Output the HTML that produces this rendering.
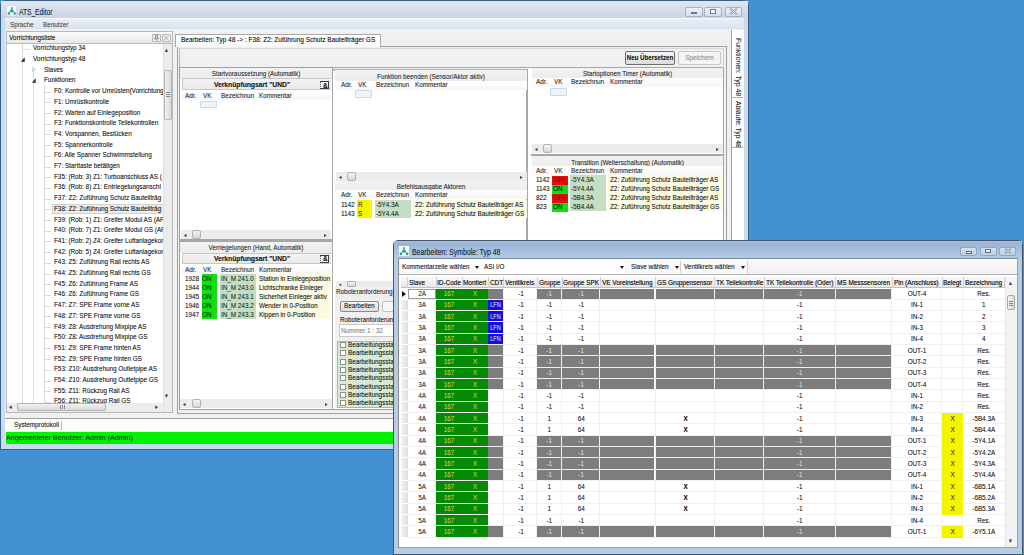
<!DOCTYPE html>
<html><head><meta charset="utf-8"><style>
html,body{margin:0;padding:0;width:1024px;height:555px;overflow:hidden;background:#4391d2;position:relative}
div{position:absolute;box-sizing:content-box}
svg{position:absolute}
.t{font-family:"Liberation Sans",sans-serif;font-size:8px;line-height:10px;height:10px;white-space:nowrap;transform:scaleX(.79);transform-origin:0 50%;text-shadow:0.2px 0 0 rgba(0,0,0,.35)}
.c{transform-origin:50% 50%}
</style></head><body>
<div style="left:0px;top:0px;width:749px;height:450px;background:#c9dbef;border:1px solid #3a5f86;box-sizing:border-box;border-radius:6px 6px 0 0"></div>
<div style="left:1px;top:1px;width:747px;height:17px;background:linear-gradient(#dfe7f1,#c8d5e5)"></div>
<div style="left:5px;top:17.5px;width:739px;height:1.5px;background:#f6f9fc"></div>
<svg style="position:absolute;left:6.5px;top:6px" width="9.5" height="9.5" viewBox="0 0 10 10"><rect width="10" height="10" fill="#f2fafa"/><path d="M4.3 1 h1.4 v2.2 l2.2 3.3 h-5.8 l2.2 -3.3 z" fill="#2aa58e"/><circle cx="1.9" cy="7.9" r="1.3" fill="#2a9a84"/><circle cx="8.1" cy="7.9" r="1.3" fill="#2a9a84"/></svg>
<div class="t" style="left:18.5px;top:7px;font-size:8.5px;color:#1e2a3a;transform:scaleX(0.78)">ATS_Editor</div>
<div style="left:685px;top:6.5px;width:17.5px;height:10px;background:linear-gradient(#e9eff7,#d3deeb);border:1px solid #a3b4c8;box-sizing:border-box;border-radius:2px"></div>
<div style="left:704px;top:6.5px;width:18px;height:10px;background:linear-gradient(#e9eff7,#d3deeb);border:1px solid #a3b4c8;box-sizing:border-box;border-radius:2px"></div>
<div style="left:724.5px;top:6.5px;width:17.5px;height:10px;background:linear-gradient(#e9eff7,#d3deeb);border:1px solid #a3b4c8;box-sizing:border-box;border-radius:2px"></div>
<div style="left:691px;top:11.5px;width:6px;height:2.5px;background:#f4f6f9;border:1px solid #6d7b8c;box-sizing:border-box"></div>
<div style="left:710px;top:9px;width:6px;height:5px;background:#f4f6f9;border:1px solid #6d7b8c;box-sizing:border-box"></div>
<svg style="position:absolute;left:729px;top:8px" width="9" height="7" viewBox="0 0 9 7"><path d="M1 0.5 L8 6.5 M8 0.5 L1 6.5" stroke="#8a96a6" stroke-width="2" /><path d="M1 0.5 L8 6.5 M8 0.5 L1 6.5" stroke="#eef2f7" stroke-width="0.8" /></svg>
<div style="left:5px;top:19px;width:739px;height:10.5px;background:linear-gradient(#e9eef7,#d9e1ee)"></div>
<div class="t" style="left:10px;top:19.5px;color:#585858">Sprache</div>
<div class="t" style="left:43px;top:19.5px;color:#585858">Benutzer</div>
<div style="left:5px;top:29px;width:738px;height:415px;background:#f0f0f0"></div>
<div style="left:6px;top:31px;width:167px;height:13px;background:linear-gradient(#fbfbfb,#e8e8e8);border:1px solid #b8b8b8;box-sizing:border-box"></div>
<div class="t" style="left:9px;top:33px;color:#111">Vorrichtungsliste</div>
<div style="left:152px;top:33.5px;width:8.5px;height:8px;border:1px solid #b8b8b8;background:#f2f2f2;box-sizing:border-box;border-radius:1px"></div>
<div style="left:162px;top:33.5px;width:8.5px;height:8px;border:1px solid #b8b8b8;background:#f2f2f2;box-sizing:border-box;border-radius:1px"></div>
<svg style="position:absolute;left:153px;top:34px" width="7" height="7" viewBox="0 0 7 7"><path d="M2.5 1 h2 v3 h1 v0.8 h-4 v-0.8 h1 z M3.5 4.8 v2" stroke="#777" stroke-width="0.7" fill="#ddd"/></svg>
<svg style="position:absolute;left:163px;top:34.5px" width="6.5" height="6" viewBox="0 0 7 6"><path d="M1 0.5 L6 5.5 M6 0.5 L1 5.5" stroke="#999" stroke-width="0.9"/></svg>
<div style="left:6px;top:44px;width:167px;height:369px;background:#fff;border:1px solid #b8b8b8;border-top:none;box-sizing:border-box"></div>
<div style="left:7px;top:44px;width:156px;height:359px;overflow:hidden">
<div class="t" style="left:26px;top:-0.7000000000000028px;color:#1a1a1a">Vorrichtungstyp 34</div>
<div class="t" style="left:26px;top:9.999999999999996px;color:#1a1a1a">Vorrichtungstyp 48</div>
<div class="t" style="left:37px;top:20.699999999999996px;color:#1a1a1a">Slaves</div>
<div class="t" style="left:37px;top:31.39999999999999px;color:#1a1a1a">Funktionen</div>
<div class="t" style="left:47px;top:42.099999999999994px;color:#1a1a1a">F0: Kontrolle vor Umrüsten(Vorrichtung</div>
<div class="t" style="left:47px;top:52.8px;color:#1a1a1a">F1: Umrüstkontrolle</div>
<div class="t" style="left:47px;top:63.499999999999986px;color:#1a1a1a">F2: Warten auf Einlegeposition</div>
<div class="t" style="left:47px;top:74.19999999999999px;color:#1a1a1a">F3: Funktionskontrolle Teilekontrollen</div>
<div class="t" style="left:47px;top:84.89999999999999px;color:#1a1a1a">F4: Vorspannen, Bestücken</div>
<div class="t" style="left:47px;top:95.6px;color:#1a1a1a">F5: Spannerkontrolle</div>
<div class="t" style="left:47px;top:106.3px;color:#1a1a1a">F6: Alle Spanner Schwimmstellung</div>
<div class="t" style="left:47px;top:116.99999999999999px;color:#1a1a1a">F7: Starttaste betätigen</div>
<div class="t" style="left:47px;top:127.69999999999999px;color:#1a1a1a">F35: (Rob: 3) Z1: Turboanschluss AS (</div>
<div class="t" style="left:47px;top:138.39999999999998px;color:#1a1a1a">F36: (Rob: 8) Z1: Entriegelungsanschl</div>
<div class="t" style="left:47px;top:149.09999999999997px;color:#1a1a1a">F37: Z2: Zuführung Schutz Bauteilträg</div>
<div style="left:45px;top:159.8px;width:160px;height:10px;background:#ececec;border:1px solid #d0d0d0;box-sizing:border-box"></div>
<div class="t" style="left:47px;top:159.8px;color:#1a1a1a">F38: Z2: Zuführung Schutz Bauteilträg</div>
<div class="t" style="left:47px;top:170.5px;color:#1a1a1a">F39: (Rob: 1) Z1: Greifer Modul AS (AF</div>
<div class="t" style="left:47px;top:181.2px;color:#1a1a1a">F40: (Rob: 7) Z1: Greifer Modul GS (AF</div>
<div class="t" style="left:47px;top:191.89999999999998px;color:#1a1a1a">F41: (Rob: 2) Z4: Greifer Luftanlagekor</div>
<div class="t" style="left:47px;top:202.59999999999997px;color:#1a1a1a">F42: (Rob: 5) Z4: Greifer Luftanlagekor</div>
<div class="t" style="left:47px;top:213.3px;color:#1a1a1a">F43: Z5: Zuführung Rail rechts AS</div>
<div class="t" style="left:47px;top:224.0px;color:#1a1a1a">F44: Z5: Zuführung Rail rechts GS</div>
<div class="t" style="left:47px;top:234.7px;color:#1a1a1a">F45: Z6: Zuführung Frame AS</div>
<div class="t" style="left:47px;top:245.39999999999998px;color:#1a1a1a">F46: Z6: Zuführung Frame GS</div>
<div class="t" style="left:47px;top:256.09999999999997px;color:#1a1a1a">F47: Z7: SPE Frame vorne AS</div>
<div class="t" style="left:47px;top:266.8px;color:#1a1a1a">F48: Z7: SPE Frame vorne GS</div>
<div class="t" style="left:47px;top:277.5px;color:#1a1a1a">F49: Z8: Ausdrehung Mixpipe AS</div>
<div class="t" style="left:47px;top:288.2px;color:#1a1a1a">F50: Z8: Ausdrehung Mixpipe GS</div>
<div class="t" style="left:47px;top:298.9px;color:#1a1a1a">F51: Z9: SPE Frame hinten AS</div>
<div class="t" style="left:47px;top:309.59999999999997px;color:#1a1a1a">F52: Z9: SPE Frame hinten GS</div>
<div class="t" style="left:47px;top:320.3px;color:#1a1a1a">F53: Z10: Ausdrehung Outletpipe AS</div>
<div class="t" style="left:47px;top:331.0px;color:#1a1a1a">F54: Z10: Ausdrehung Outletpipe GS</div>
<div class="t" style="left:47px;top:341.7px;color:#1a1a1a">F55: Z11: Rückzug Rail AS</div>
<div class="t" style="left:47px;top:352.4px;color:#1a1a1a">F56: Z11: Rückzug Rail GS</div>
<div style="left:15px;top:0px;width:0;height:359px;border-left:1px solid #dcdcdc"></div>
<div style="left:26px;top:25px;width:0;height:334px;border-left:1px solid #dcdcdc"></div>
<div style="left:37px;top:41px;width:0;height:320px;border-left:1px solid #dcdcdc"></div>
<div style="left:37px;top:47.6px;width:7px;height:0;border-top:1px solid #dcdcdc"></div>
<div style="left:37px;top:58.3px;width:7px;height:0;border-top:1px solid #dcdcdc"></div>
<div style="left:37px;top:69.0px;width:7px;height:0;border-top:1px solid #dcdcdc"></div>
<div style="left:37px;top:79.7px;width:7px;height:0;border-top:1px solid #dcdcdc"></div>
<div style="left:37px;top:90.4px;width:7px;height:0;border-top:1px solid #dcdcdc"></div>
<div style="left:37px;top:101.1px;width:7px;height:0;border-top:1px solid #dcdcdc"></div>
<div style="left:37px;top:111.8px;width:7px;height:0;border-top:1px solid #dcdcdc"></div>
<div style="left:37px;top:122.5px;width:7px;height:0;border-top:1px solid #dcdcdc"></div>
<div style="left:37px;top:133.2px;width:7px;height:0;border-top:1px solid #dcdcdc"></div>
<div style="left:37px;top:143.9px;width:7px;height:0;border-top:1px solid #dcdcdc"></div>
<div style="left:37px;top:154.6px;width:7px;height:0;border-top:1px solid #dcdcdc"></div>
<div style="left:37px;top:165.3px;width:7px;height:0;border-top:1px solid #dcdcdc"></div>
<div style="left:37px;top:176.0px;width:7px;height:0;border-top:1px solid #dcdcdc"></div>
<div style="left:37px;top:186.7px;width:7px;height:0;border-top:1px solid #dcdcdc"></div>
<div style="left:37px;top:197.4px;width:7px;height:0;border-top:1px solid #dcdcdc"></div>
<div style="left:37px;top:208.1px;width:7px;height:0;border-top:1px solid #dcdcdc"></div>
<div style="left:37px;top:218.8px;width:7px;height:0;border-top:1px solid #dcdcdc"></div>
<div style="left:37px;top:229.5px;width:7px;height:0;border-top:1px solid #dcdcdc"></div>
<div style="left:37px;top:240.2px;width:7px;height:0;border-top:1px solid #dcdcdc"></div>
<div style="left:37px;top:250.9px;width:7px;height:0;border-top:1px solid #dcdcdc"></div>
<div style="left:37px;top:261.6px;width:7px;height:0;border-top:1px solid #dcdcdc"></div>
<div style="left:37px;top:272.3px;width:7px;height:0;border-top:1px solid #dcdcdc"></div>
<div style="left:37px;top:283.0px;width:7px;height:0;border-top:1px solid #dcdcdc"></div>
<div style="left:37px;top:293.7px;width:7px;height:0;border-top:1px solid #dcdcdc"></div>
<div style="left:37px;top:304.4px;width:7px;height:0;border-top:1px solid #dcdcdc"></div>
<div style="left:37px;top:315.1px;width:7px;height:0;border-top:1px solid #dcdcdc"></div>
<div style="left:37px;top:325.8px;width:7px;height:0;border-top:1px solid #dcdcdc"></div>
<div style="left:37px;top:336.5px;width:7px;height:0;border-top:1px solid #dcdcdc"></div>
<div style="left:37px;top:347.2px;width:7px;height:0;border-top:1px solid #dcdcdc"></div>
<div style="left:37px;top:357.9px;width:7px;height:0;border-top:1px solid #dcdcdc"></div>
<div style="left:15px;top:4.799999999999997px;width:8px;height:0;border-top:1px solid #dcdcdc"></div>
<div class="t" style="left:14px;top:9.600000000000001px;font-size:6px;color:#333">◢</div>
<div class="t" style="left:25px;top:20.299999999999997px;font-size:6px;color:#aaa">▷</div>
<div class="t" style="left:25px;top:30.900000000000006px;font-size:6px;color:#333">◢</div>
</div>
<div style="left:163px;top:44px;width:9px;height:368px;background:#ececec;border-left:1px solid #e0e0e0;box-sizing:border-box"></div>
<div style="left:164px;top:70px;width:8px;height:50px;background:linear-gradient(90deg,#f2f2f2,#d8d8d8);border:1px solid #b5b5b5;border-radius:2px;box-sizing:border-box"></div>
<div style="left:166px;top:91.5px;width:4px;height:0.8px;background:#8a8a8a"></div>
<div style="left:166px;top:93.5px;width:4px;height:0.8px;background:#8a8a8a"></div>
<div style="left:166px;top:95.5px;width:4px;height:0.8px;background:#8a8a8a"></div>
<div class="t" style="left:165px;top:45px;font-size:7px;color:#444">▴</div>
<div class="t" style="left:165px;top:391px;font-size:7px;color:#444">▾</div>
<div style="left:7px;top:403px;width:156px;height:9px;background:#ececec"></div>
<div style="left:17px;top:403px;width:89px;height:8px;background:linear-gradient(#f2f2f2,#d8d8d8);border:1px solid #b5b5b5;border-radius:2px;box-sizing:border-box"></div>
<div style="left:59.5px;top:405px;width:0.8px;height:4px;background:#8a8a8a"></div>
<div style="left:61.5px;top:405px;width:0.8px;height:4px;background:#8a8a8a"></div>
<div style="left:63.5px;top:405px;width:0.8px;height:4px;background:#8a8a8a"></div>
<div class="t" style="left:9px;top:402px;font-size:7px;color:#444">◂</div>
<div class="t" style="left:155px;top:402px;font-size:7px;color:#444">▸</div>
<div style="left:177px;top:46px;width:549.5px;height:368px;background:#f0f0f0;border:1px solid #a0a0a0;box-sizing:border-box"></div>
<div style="left:175px;top:33.5px;width:206px;height:13.5px;background:linear-gradient(#ffffff,#f8f8f8);border:1px solid #a8a8a8;border-bottom:none;box-sizing:border-box"></div>
<div class="t" style="left:181.4px;top:35px;color:#111;transform:scaleX(0.81)">Bearbeiten: Typ 48 -&gt; : F38: Z2: Zuführung Schutz Bauteilträger GS</div>
<div style="left:179.3px;top:47.5px;width:544.7px;height:20px;background:#f0f0f0;border-top:1px solid #d8d8d8;border-left:1px solid #b8b8b8;border-right:1px solid #d0d0d0;border-bottom:1px solid #a8a8a8;box-sizing:border-box"></div>
<div style="left:625px;top:51px;width:50px;height:14px;background:linear-gradient(#f5f5f5,#dcdcdc);border:1px solid #707070;border-radius:2px;box-sizing:border-box"></div>
<div class="t c" style="left:625px;width:50px;top:53px;display:flex;justify-content:center;font-weight:bold;color:#222;transform:scaleX(0.77)">Neu Übersetzen</div>
<div style="left:678px;top:51px;width:43px;height:14px;background:#f4f4f4;border:1px solid #c8c8c8;border-radius:2px;box-sizing:border-box"></div>
<div class="t c" style="left:678px;width:43px;top:53px;display:flex;justify-content:center;color:#a0a0a0">Speichern</div>
<div style="left:179.3px;top:67px;width:153.7px;height:343px;background:#fff;border:1px solid #a0a0a0;box-sizing:border-box"></div>
<div style="left:180px;top:68px;width:152px;height:174px;background:#fff"></div>
<div style="left:180px;top:68px;width:152px;height:11px;background:linear-gradient(#f2f2f2,#ececec)"></div>
<div class="t c" style="left:180px;width:152px;top:69px;display:flex;justify-content:center;color:#333">Startvoraussetzung (Automatik)</div>
<div style="left:182px;top:78.4px;width:149px;height:11.8px;background:linear-gradient(#f3f3f3,#e9e9e9);border:1px solid #c8c8c8;border-right:none;box-sizing:border-box"></div>
<div class="t c" style="left:182px;width:140px;top:79.5px;display:flex;justify-content:center;font-weight:bold;color:#222;transform:scaleX(0.84)">Verknüpfungsart "UND"</div>
<div style="left:320.3px;top:81.2px;width:8.4px;height:8.3px;background:#f4f4f8;border:1px solid #3a3a3a;border-left:1px dotted #555;box-sizing:border-box"></div>
<div class="t" style="left:322.6px;top:80.5px;font-size:7px;font-weight:bold;color:#111;transform:scaleX(0.9)">&amp;</div>
<div style="left:181px;top:91.0px;width:150px;height:9px;background:linear-gradient(#ffffff,#f6f6f6)"></div>
<div class="t" style="left:185px;top:90.5px;color:#333">Adr.</div>
<div class="t" style="left:203px;top:90.5px;color:#333">VK</div>
<div class="t" style="left:221px;top:90.5px;color:#333">Bezeichnun</div>
<div class="t" style="left:258.5px;top:90.5px;color:#333">Kommentar</div>
<div style="left:200px;top:101px;width:17px;height:7px;background:#eef4fb;border:1px solid #c9d9ea;border-radius:1px;box-sizing:border-box"></div>
<div style="left:181px;top:230px;width:150px;height:9px;background:#ececec"></div>
<div style="left:192px;top:230px;width:9px;height:9px;background:linear-gradient(#f4f4f4,#d6d6d6);border:1px solid #b2b2b2;border-radius:2px;box-sizing:border-box"></div>
<div class="t" style="left:184px;top:229.5px;font-size:6px;color:#333">◂</div>
<div class="t" style="left:324px;top:229.5px;font-size:6px;color:#333">▸</div>
<div style="left:179px;top:239px;width:153px;height:3px;background:#a6a6a6"></div>
<div style="left:180px;top:242px;width:152px;height:11px;background:linear-gradient(#f2f2f2,#ececec)"></div>
<div class="t c" style="left:180px;width:152px;top:242.5px;display:flex;justify-content:center;color:#333">Verriegelungen (Hand, Automatik)</div>
<div style="left:182px;top:253px;width:149px;height:11px;background:linear-gradient(#f3f3f3,#e9e9e9);border:1px solid #c8c8c8;border-right:none;box-sizing:border-box"></div>
<div class="t c" style="left:182px;width:140px;top:253.5px;display:flex;justify-content:center;font-weight:bold;color:#222;transform:scaleX(0.84)">Verknüpfungsart "UND"</div>
<div style="left:320.3px;top:254.8px;width:8.4px;height:8.3px;background:#f4f4f8;border:1px solid #3a3a3a;border-left:1px dotted #555;box-sizing:border-box"></div>
<div class="t" style="left:322.6px;top:254.10000000000002px;font-size:7px;font-weight:bold;color:#111;transform:scaleX(0.9)">&amp;</div>
<div style="left:181px;top:265.1px;width:150px;height:9px;background:linear-gradient(#ffffff,#f6f6f6)"></div>
<div class="t" style="left:185px;top:264.6px;color:#333">Adr.</div>
<div class="t" style="left:203px;top:264.6px;color:#333">VK</div>
<div class="t" style="left:221px;top:264.6px;color:#333">Bezeichnun</div>
<div class="t" style="left:258.5px;top:264.6px;color:#333">Kommentar</div>
<div style="left:182px;top:274px;width:149px;height:45px;background:linear-gradient(90deg,#ffffff 0%,#fbfbe9 100%)"></div>
<div style="left:201.5px;top:274px;width:15.5px;height:44.5px;background:#10e010"></div>
<div style="left:220px;top:274px;width:35.5px;height:44.5px;background:#c5dcc5"></div>
<div style="left:258px;top:274px;width:73px;height:44.5px;background:#fbfbe4"></div>
<div class="t" style="left:185px;top:274.0px;color:#222">1928</div>
<div class="t" style="left:202px;top:274.0px;color:#0a3a0a">ON</div>
<div class="t" style="left:220.5px;top:274.0px;color:#2a3a2a">IN_M 241.0</div>
<div class="t" style="left:259px;top:274.0px;color:#222">Station in Einlegeposition</div>
<div class="t" style="left:185px;top:282.9px;color:#222">1944</div>
<div class="t" style="left:202px;top:282.9px;color:#0a3a0a">ON</div>
<div class="t" style="left:220.5px;top:282.9px;color:#2a3a2a">IN_M 243.0</div>
<div class="t" style="left:259px;top:282.9px;color:#222">Lichtschranke Einleger</div>
<div class="t" style="left:185px;top:291.8px;color:#222">1945</div>
<div class="t" style="left:202px;top:291.8px;color:#0a3a0a">ON</div>
<div class="t" style="left:220.5px;top:291.8px;color:#2a3a2a">IN_M 243.1</div>
<div class="t" style="left:259px;top:291.8px;color:#222">Sicherheit Einleger aktiv</div>
<div class="t" style="left:185px;top:300.7px;color:#222">1946</div>
<div class="t" style="left:202px;top:300.7px;color:#0a3a0a">ON</div>
<div class="t" style="left:220.5px;top:300.7px;color:#2a3a2a">IN_M 243.2</div>
<div class="t" style="left:259px;top:300.7px;color:#222">Wender in 0-Position</div>
<div class="t" style="left:185px;top:309.6px;color:#222">1947</div>
<div class="t" style="left:202px;top:309.6px;color:#0a3a0a">ON</div>
<div class="t" style="left:220.5px;top:309.6px;color:#2a3a2a">IN_M 243.3</div>
<div class="t" style="left:259px;top:309.6px;color:#222">Kippen in 0-Position</div>
<div style="left:180.3px;top:399.2px;width:151.7px;height:9.3px;background:#ececec"></div>
<div style="left:192px;top:399.2px;width:9px;height:9.3px;background:linear-gradient(#f4f4f4,#d6d6d6);border:1px solid #b2b2b2;border-radius:2px;box-sizing:border-box"></div>
<div class="t" style="left:183.3px;top:398.84999999999997px;font-size:6px;color:#333">◂</div>
<div class="t" style="left:325.0px;top:398.84999999999997px;font-size:6px;color:#333">▸</div>
<div style="left:333px;top:68.5px;width:194px;height:341.5px;background:#fff;border-top:2px solid #b4b4b4;border-bottom:1px solid #a0a0a0;box-sizing:border-box"></div>
<div style="left:331.5px;top:67.5px;width:1.5px;height:342.5px;background:#a8a8a8"></div>
<div style="left:526.3px;top:68.5px;width:1.7px;height:343px;background:#a8a8a8"></div>
<div style="left:335px;top:70px;width:192px;height:11px;background:linear-gradient(#f2f2f2,#ececec)"></div>
<div class="t c" style="left:335px;width:192px;top:72px;display:flex;justify-content:center;color:#333">Funktion beenden (Sensor/Aktor aktiv)</div>
<div style="left:336px;top:80.5px;width:191px;height:9px;background:linear-gradient(#ffffff,#f6f6f6)"></div>
<div class="t" style="left:340.7px;top:80px;color:#333">Adr.</div>
<div class="t" style="left:358.3px;top:80px;color:#333">VK</div>
<div class="t" style="left:376.3px;top:80px;color:#333">Bezeichnun</div>
<div class="t" style="left:414.6px;top:80px;color:#333">Kommentar</div>
<div style="left:355px;top:90px;width:17px;height:8px;background:#eef4fb;border:1px solid #c9d9ea;border-radius:1px;box-sizing:border-box"></div>
<div style="left:336px;top:172px;width:191px;height:9px;background:#ececec"></div>
<div style="left:347px;top:172px;width:9px;height:9px;background:linear-gradient(#f4f4f4,#d6d6d6);border:1px solid #b2b2b2;border-radius:2px;box-sizing:border-box"></div>
<div class="t" style="left:339px;top:171.5px;font-size:6px;color:#333">◂</div>
<div class="t" style="left:520px;top:171.5px;font-size:6px;color:#333">▸</div>
<div style="left:335px;top:181px;width:192px;height:11px;background:linear-gradient(#f2f2f2,#ececec)"></div>
<div class="t c" style="left:335px;width:192px;top:181.5px;display:flex;justify-content:center;color:#333">Befehlsausgabe Aktoren</div>
<div style="left:336px;top:190.1px;width:191px;height:9px;background:linear-gradient(#ffffff,#f6f6f6)"></div>
<div class="t" style="left:340.7px;top:189.6px;color:#333">Adr.</div>
<div class="t" style="left:358.3px;top:189.6px;color:#333">VK</div>
<div class="t" style="left:376.3px;top:189.6px;color:#333">Bezeichnun</div>
<div class="t" style="left:414.6px;top:189.6px;color:#333">Kommentar</div>
<div style="left:336px;top:200px;width:191px;height:18px;background:linear-gradient(90deg,#ffffff 0%,#fbfbe9 100%)"></div>
<div style="left:356.5px;top:200px;width:15px;height:17.5px;background:#f5f500"></div>
<div style="left:375px;top:200px;width:35.5px;height:17.5px;background:#c5dcc5"></div>
<div style="left:413px;top:200px;width:114px;height:17.5px;background:#fbfbe4"></div>
<div class="t" style="left:340.7px;top:200.0px;color:#222">1142</div>
<div class="t" style="left:357.5px;top:200.0px;color:#554400">R</div>
<div class="t" style="left:376px;top:200.0px;color:#2a3a2a">-5Y4.3A</div>
<div class="t" style="left:414.6px;top:200.0px;color:#222">Z2: Zuführung Schutz Bauteilträger AS</div>
<div class="t" style="left:340.7px;top:208.8px;color:#222">1143</div>
<div class="t" style="left:357.5px;top:208.8px;color:#554400">S</div>
<div class="t" style="left:376px;top:208.8px;color:#2a3a2a">-5Y4.4A</div>
<div class="t" style="left:414.6px;top:208.8px;color:#222">Z2: Zuführung Schutz Bauteilträger GS</div>
<div style="left:336px;top:281px;width:58px;height:6px;background:#ececec"></div>
<div style="left:346.5px;top:281px;width:9.5px;height:6px;background:linear-gradient(#f4f4f4,#d6d6d6);border:1px solid #b2b2b2;border-radius:1px;box-sizing:border-box"></div>
<div class="t" style="left:339px;top:279px;font-size:5px;color:#333">◂</div>
<div style="left:335px;top:287px;width:60px;height:11px;background:linear-gradient(#f2f2f2,#ececec)"></div>
<div class="t" style="left:336px;top:287px;color:#333">Roboteranforderung</div>
<div style="left:335px;top:298px;width:60px;height:110px;background:#f0f0f0"></div>
<div style="left:340px;top:300.5px;width:38.5px;height:11px;background:linear-gradient(#f6f6f6,#dedede);border:1px solid #8a8a8a;border-radius:2px;box-sizing:border-box"></div>
<div class="t c" style="left:340px;width:38.5px;top:301px;display:flex;justify-content:center;color:#222">Bearbeiten</div>
<div style="left:382px;top:300.5px;width:20px;height:11px;background:#f6f6f6;border:1px solid #c0c0c0;border-radius:2px;box-sizing:border-box"></div>
<div class="t" style="left:340px;top:314.5px;color:#222">Roboteranforderung</div>
<div style="left:339px;top:324px;width:60px;height:12.5px;background:#fff;border:1px solid #c8c8c8;box-sizing:border-box"></div>
<div class="t" style="left:341px;top:325.5px;color:#9a9a9a">Nummer 1 : 32</div>
<div style="left:337px;top:341px;width:60px;height:67px;background:#d8e8d4;border:1px solid #a8b8a8;box-sizing:border-box"></div>
<div style="left:340px;top:342.1px;width:5.5px;height:6px;background:#fff;border:1px solid #8a9a8a;box-sizing:border-box"></div>
<div class="t" style="left:348px;top:340.1px;color:#1a2a1a">Bearbeitungsstatus</div>
<div style="left:340px;top:350.40000000000003px;width:5.5px;height:6px;background:#fff;border:1px solid #8a9a8a;box-sizing:border-box"></div>
<div class="t" style="left:348px;top:348.40000000000003px;color:#1a2a1a">Bearbeitungsstatus</div>
<div style="left:340px;top:358.70000000000005px;width:5.5px;height:6px;background:#fff;border:1px solid #8a9a8a;box-sizing:border-box"></div>
<div class="t" style="left:348px;top:356.70000000000005px;color:#1a2a1a">Bearbeitungsstatus</div>
<div style="left:340px;top:367.0px;width:5.5px;height:6px;background:#fff;border:1px solid #8a9a8a;box-sizing:border-box"></div>
<div class="t" style="left:348px;top:365.0px;color:#1a2a1a">Bearbeitungsstatus</div>
<div style="left:340px;top:375.3px;width:5.5px;height:6px;background:#fff;border:1px solid #8a9a8a;box-sizing:border-box"></div>
<div class="t" style="left:348px;top:373.3px;color:#1a2a1a">Bearbeitungsstatus</div>
<div style="left:340px;top:383.6px;width:5.5px;height:6px;background:#fff;border:1px solid #8a9a8a;box-sizing:border-box"></div>
<div class="t" style="left:348px;top:381.6px;color:#1a2a1a">Bearbeitungsstatus</div>
<div style="left:340px;top:391.90000000000003px;width:5.5px;height:6px;background:#fff;border:1px solid #8a9a8a;box-sizing:border-box"></div>
<div class="t" style="left:348px;top:389.90000000000003px;color:#1a2a1a">Bearbeitungsstatus</div>
<div style="left:340px;top:400.20000000000005px;width:5.5px;height:6px;background:#fff;border:1px solid #8a9a8a;box-sizing:border-box"></div>
<div class="t" style="left:348px;top:398.20000000000005px;color:#1a2a1a">Bearbeitungsstatus</div>
<div style="left:528px;top:67.5px;width:195px;height:345px;background:#fff;box-sizing:border-box"></div>
<div style="left:722.5px;top:67.5px;width:1.5px;height:345px;background:#a8a8a8"></div>
<div style="left:532px;top:68px;width:191px;height:11px;background:linear-gradient(#f2f2f2,#ececec)"></div>
<div class="t c" style="left:532px;width:191px;top:68.6px;display:flex;justify-content:center;color:#333">Startoptionen Timer (Automatik)</div>
<div style="left:532px;top:77.9px;width:191px;height:9px;background:linear-gradient(#ffffff,#f6f6f6)"></div>
<div class="t" style="left:535.6px;top:77.4px;color:#333">Adr.</div>
<div class="t" style="left:553.5px;top:77.4px;color:#333">VK</div>
<div class="t" style="left:571.2px;top:77.4px;color:#333">Bezeichnun</div>
<div class="t" style="left:609.6px;top:77.4px;color:#333">Kommentar</div>
<div style="left:550px;top:88px;width:17px;height:7.5px;background:#eef4fb;border:1px solid #c9d9ea;border-radius:1px;box-sizing:border-box"></div>
<div style="left:532px;top:144px;width:191px;height:9px;background:#ececec"></div>
<div style="left:543px;top:144px;width:9px;height:9px;background:linear-gradient(#f4f4f4,#d6d6d6);border:1px solid #b2b2b2;border-radius:2px;box-sizing:border-box"></div>
<div class="t" style="left:535px;top:143.5px;font-size:6px;color:#333">◂</div>
<div class="t" style="left:716px;top:143.5px;font-size:6px;color:#333">▸</div>
<div style="left:531px;top:153.5px;width:192px;height:2px;background:#a6a6a6"></div>
<div style="left:532px;top:156px;width:191px;height:11px;background:linear-gradient(#f2f2f2,#ececec)"></div>
<div class="t c" style="left:532px;width:191px;top:157.5px;display:flex;justify-content:center;color:#333">Transition (Weiterschaltung) (Automatik)</div>
<div style="left:532px;top:166.3px;width:191px;height:9px;background:linear-gradient(#ffffff,#f6f6f6)"></div>
<div class="t" style="left:535.6px;top:165.8px;color:#333">Adr.</div>
<div class="t" style="left:553.5px;top:165.8px;color:#333">VK</div>
<div class="t" style="left:571.2px;top:165.8px;color:#333">Bezeichnun</div>
<div class="t" style="left:609.6px;top:165.8px;color:#333">Kommentar</div>
<div style="left:532px;top:175px;width:191px;height:36px;background:linear-gradient(90deg,#ffffff 0%,#fbfbe9 100%)"></div>
<div style="left:570px;top:175px;width:36px;height:36px;background:#c5dcc5"></div>
<div style="left:608px;top:175px;width:115px;height:36px;background:#fbfbe4"></div>
<div style="left:552px;top:175.5px;width:15.5px;height:9px;background:#e01010"></div>
<div class="t" style="left:535.6px;top:175px;color:#222">1142</div>
<div class="t" style="left:553px;top:175px;color:#a01010">OFF</div>
<div class="t" style="left:571px;top:175px;color:#2a3a2a">-5Y4.3A</div>
<div class="t" style="left:609.6px;top:175px;color:#222">Z2: Zuführung Schutz Bauteilträger AS</div>
<div style="left:552px;top:184.5px;width:15.5px;height:9px;background:#10e010"></div>
<div class="t" style="left:535.6px;top:184px;color:#222">1143</div>
<div class="t" style="left:553px;top:184px;#0a3a0a">ON</div>
<div class="t" style="left:571px;top:184px;color:#2a3a2a">-5Y4.4A</div>
<div class="t" style="left:609.6px;top:184px;color:#222">Z2: Zuführung Schutz Bauteilträger GS</div>
<div style="left:552px;top:193.5px;width:15.5px;height:9px;background:#e01010"></div>
<div class="t" style="left:535.6px;top:193px;color:#222">822</div>
<div class="t" style="left:553px;top:193px;color:#a01010">OFF</div>
<div class="t" style="left:571px;top:193px;color:#2a3a2a">-5B4.3A</div>
<div class="t" style="left:609.6px;top:193px;color:#222">Z2: Zuführung Schutz Bauteilträger AS</div>
<div style="left:552px;top:202.5px;width:15.5px;height:9px;background:#10e010"></div>
<div class="t" style="left:535.6px;top:202px;color:#222">823</div>
<div class="t" style="left:553px;top:202px;#0a3a0a">ON</div>
<div class="t" style="left:571px;top:202px;color:#2a3a2a">-5B4.4A</div>
<div class="t" style="left:609.6px;top:202px;color:#222">Z2: Zuführung Schutz Bauteilträger GS</div>
<div style="left:728px;top:29px;width:15px;height:415px;background:#f0f0f0"></div>
<div style="left:731px;top:30px;width:13px;height:384px;background:#fff;border-left:1px solid #a0a0a0;box-sizing:border-box"></div>
<div class="t" style="left:732.5px;top:38px;height:auto;width:10px;writing-mode:vertical-rl;color:#222;transform:scaleY(.855);transform-origin:50% 0">Funktionen: Typ 48</div>
<div style="left:732px;top:97px;width:11px;height:1px;background:#b0b0b0"></div>
<div class="t" style="left:732.5px;top:100.5px;height:auto;width:10px;writing-mode:vertical-rl;color:#222;transform:scaleY(.845);transform-origin:50% 0">Abläufe: Typ 48</div>
<div style="left:732px;top:147px;width:11px;height:1px;background:#b0b0b0"></div>
<div style="left:5px;top:418px;width:738px;height:1px;background:#a0a0a0"></div>
<div style="left:5px;top:419px;width:738px;height:12px;background:#fdfdfd"></div>
<div class="t" style="left:14px;top:420px;color:#222">Systemprotokoll</div>
<div style="left:61px;top:420.5px;width:1px;height:9px;background:#b8b8b8"></div>
<div style="left:6px;top:431.5px;width:737px;height:12.2px;background:#00f000"></div>
<div class="t" style="left:6px;top:432.5px;font-size:8px;color:#145014;transform:scaleX(0.9)">Angemeldeter Benutzer: Admin (Admin)</div>
<div style="left:393px;top:240px;width:630px;height:315px;background:#b6cde8;border:1px solid #44556a;box-sizing:border-box;border-radius:5px 5px 0 0"></div>
<div style="left:394px;top:241px;width:628px;height:17px;background:linear-gradient(#a9bfd9,#9ab5d6 15%,#b2cbe7)"></div>
<div style="left:398px;top:257.8px;width:619.5px;height:1.2px;background:#7d8a99"></div>
<svg style="position:absolute;left:399px;top:246px" width="10" height="10" viewBox="0 0 10 10"><rect width="10" height="10" fill="#f2fafa"/><path d="M4.3 1 h1.4 v2.2 l2.2 3.3 h-5.8 l2.2 -3.3 z" fill="#2aa58e"/><circle cx="1.9" cy="7.9" r="1.3" fill="#2a9a84"/><circle cx="8.1" cy="7.9" r="1.3" fill="#2a9a84"/></svg>
<div class="t" style="left:412px;top:247px;font-size:8.5px;color:#1e2a3a;transform:scaleX(0.81)">Bearbeiten: Symbole: Typ 48</div>
<div style="left:960px;top:247px;width:17px;height:8.5px;background:linear-gradient(#d6e2f0,#bccfe6);border:1px solid #8fa6c2;box-sizing:border-box;border-radius:2px"></div>
<div style="left:979.5px;top:247px;width:17px;height:8.5px;background:linear-gradient(#d6e2f0,#bccfe6);border:1px solid #8fa6c2;box-sizing:border-box;border-radius:2px"></div>
<div style="left:999px;top:247px;width:17px;height:8.5px;background:linear-gradient(#d6e2f0,#bccfe6);border:1px solid #8fa6c2;box-sizing:border-box;border-radius:2px"></div>
<div style="left:965.5px;top:251px;width:6px;height:2.5px;background:#eef2f7;border:1px solid #5d6b7c;box-sizing:border-box"></div>
<div style="left:985px;top:248.5px;width:6px;height:4.5px;background:#eef2f7;border:1px solid #5d6b7c;box-sizing:border-box"></div>
<svg style="position:absolute;left:1004px;top:248px" width="8" height="6" viewBox="0 0 8 6"><path d="M1 0.5 L7 5.5 M7 0.5 L1 5.5" stroke="#7f8da0" stroke-width="1.8" /><path d="M1 0.5 L7 5.5 M7 0.5 L1 5.5" stroke="#e8eef6" stroke-width="0.7" /></svg>
<div style="left:398px;top:259px;width:619.5px;height:289px;background:#f0f0f0;border:1px solid #8a8a8a;box-sizing:border-box"></div>
<div style="left:399px;top:259px;width:618px;height:16px;background:linear-gradient(#fbfbfb,#f0f0f0);border-bottom:1px solid #b0b0b0;box-sizing:border-box"></div>
<div style="left:400px;top:260px;width:80.5px;height:14px;background:linear-gradient(#ffffff,#f7f7f7)"></div>
<div style="left:481px;top:260.5px;width:144px;height:13px;background:#fff"></div>
<div style="left:628px;top:260.5px;width:52px;height:13px;background:#f9f9f9"></div>
<div style="left:681px;top:260.5px;width:66px;height:13px;background:#f9f9f9"></div>
<div class="t" style="left:402px;top:261.5px;color:#222">Kommentarzeile wählen</div>
<div style="left:475.0px;top:266px;width:0;height:0;border-left:2.5px solid transparent;border-right:2.5px solid transparent;border-top:3px solid #111"></div>
<div class="t" style="left:484px;top:261.5px;color:#222">ASI I/O</div>
<div style="left:620.0px;top:266px;width:0;height:0;border-left:2.5px solid transparent;border-right:2.5px solid transparent;border-top:3px solid #111"></div>
<div class="t" style="left:631px;top:261.5px;color:#222">Slave wählen</div>
<div style="left:675.0px;top:266px;width:0;height:0;border-left:2.5px solid transparent;border-right:2.5px solid transparent;border-top:3px solid #111"></div>
<div style="left:680px;top:261px;width:1px;height:12px;background:#d0d0d0"></div>
<div class="t" style="left:684px;top:261.5px;color:#222">Ventilkreis wählen</div>
<div style="left:741.0px;top:266px;width:0;height:0;border-left:2.5px solid transparent;border-right:2.5px solid transparent;border-top:3px solid #111"></div>
<div style="left:747px;top:261px;width:1px;height:12px;background:#d0d0d0"></div>
<div style="left:399px;top:275px;width:618px;height:272px;background:#fff"></div>
<div style="left:400.5px;top:276.5px;width:604.2px;height:11.100000000000023px;background:linear-gradient(#f9f9f9,#e8e8e8);border-bottom:1px solid #c0c0c0;box-sizing:border-box"></div>
<div style="left:407.1px;top:276.5px;width:1px;height:11.100000000000023px;background:#d2d2d2"></div>
<div style="left:435.5px;top:276.5px;width:1px;height:11.100000000000023px;background:#d2d2d2"></div>
<div class="t" style="left:408.90000000000003px;top:277.85px;color:#1a1a1a;transform:scaleX(.80);text-shadow:0.2px 0 0 #777">Slave</div>
<div style="left:461.5px;top:276.5px;width:1px;height:11.100000000000023px;background:#d2d2d2"></div>
<div class="t" style="left:437.3px;top:277.85px;color:#1a1a1a;transform:scaleX(.80);text-shadow:0.2px 0 0 #777">ID-Code</div>
<div style="left:487.9px;top:276.5px;width:1px;height:11.100000000000023px;background:#d2d2d2"></div>
<div class="t" style="left:463.3px;top:277.85px;color:#1a1a1a;transform:scaleX(.80);text-shadow:0.2px 0 0 #777">Montiert</div>
<div style="left:503.0px;top:276.5px;width:1px;height:11.100000000000023px;background:#d2d2d2"></div>
<div class="t" style="left:489.7px;top:277.85px;color:#1a1a1a;transform:scaleX(.80);text-shadow:0.2px 0 0 #777">CDT</div>
<div style="left:536.9px;top:276.5px;width:1px;height:11.100000000000023px;background:#d2d2d2"></div>
<div class="t" style="left:504.8px;top:277.85px;color:#1a1a1a;transform:scaleX(.80);text-shadow:0.2px 0 0 #777">Ventilkreis</div>
<div style="left:561.5px;top:276.5px;width:1px;height:11.100000000000023px;background:#d2d2d2"></div>
<div class="t" style="left:538.6999999999999px;top:277.85px;color:#1a1a1a;transform:scaleX(.80);text-shadow:0.2px 0 0 #777">Gruppe</div>
<div style="left:599.9px;top:276.5px;width:1px;height:11.100000000000023px;background:#d2d2d2"></div>
<div class="t" style="left:563.3px;top:277.85px;color:#1a1a1a;transform:scaleX(.80);text-shadow:0.2px 0 0 #777">Gruppe SPK</div>
<div style="left:655.0px;top:276.5px;width:1px;height:11.100000000000023px;background:#d2d2d2"></div>
<div class="t" style="left:601.6999999999999px;top:277.85px;color:#1a1a1a;transform:scaleX(.80);text-shadow:0.2px 0 0 #777">VE Voreinstellung</div>
<div style="left:714.0px;top:276.5px;width:1px;height:11.100000000000023px;background:#d2d2d2"></div>
<div class="t" style="left:656.8px;top:277.85px;color:#1a1a1a;transform:scaleX(.80);text-shadow:0.2px 0 0 #777">GS Gruppensensor</div>
<div style="left:763.9px;top:276.5px;width:1px;height:11.100000000000023px;background:#d2d2d2"></div>
<div class="t" style="left:715.8px;top:277.85px;color:#1a1a1a;transform:scaleX(.80);text-shadow:0.2px 0 0 #777">TK Teilekontrolle</div>
<div style="left:835.3px;top:276.5px;width:1px;height:11.100000000000023px;background:#d2d2d2"></div>
<div class="t" style="left:765.6999999999999px;top:277.85px;color:#1a1a1a;transform:scaleX(.80);text-shadow:0.2px 0 0 #777">TK Teilekontrolle (Oder)</div>
<div style="left:891.7px;top:276.5px;width:1px;height:11.100000000000023px;background:#d2d2d2"></div>
<div class="t" style="left:837.0999999999999px;top:277.85px;color:#1a1a1a;transform:scaleX(.80);text-shadow:0.2px 0 0 #777">MS Messsensoren</div>
<div style="left:941.6px;top:276.5px;width:1px;height:11.100000000000023px;background:#d2d2d2"></div>
<div class="t" style="left:893.5px;top:277.85px;color:#1a1a1a;transform:scaleX(.80);text-shadow:0.2px 0 0 #777">Pin (Anschluss)</div>
<div style="left:962.8px;top:276.5px;width:1px;height:11.100000000000023px;background:#d2d2d2"></div>
<div class="t" style="left:943.4px;top:277.85px;color:#1a1a1a;transform:scaleX(.80);text-shadow:0.2px 0 0 #777">Belegt</div>
<div style="left:1004.2px;top:276.5px;width:1px;height:11.100000000000023px;background:#d2d2d2"></div>
<div class="t" style="left:964.5999999999999px;top:277.85px;color:#1a1a1a;transform:scaleX(.80);text-shadow:0.2px 0 0 #777">Bezeichnung</div>
<div style="left:400.5px;top:288.5px;width:7.1px;height:10.32px;background:linear-gradient(90deg,#f4f4f4,#dedede)"></div>
<div style="left:407.6px;top:298.82px;width:597px;height:1px;background:#f0f0f0"></div>
<div style="left:435px;top:288.5px;width:1px;height:11.32px;background:#f0f0f0"></div>
<div style="left:461px;top:288.5px;width:1px;height:11.32px;background:#f0f0f0"></div>
<div style="left:487.4px;top:288.5px;width:1px;height:11.32px;background:#f0f0f0"></div>
<div style="left:502.5px;top:288.5px;width:1px;height:11.32px;background:#f0f0f0"></div>
<div style="left:536.4px;top:288.5px;width:1px;height:11.32px;background:#f0f0f0"></div>
<div style="left:561px;top:288.5px;width:1px;height:11.32px;background:#f0f0f0"></div>
<div style="left:599.4px;top:288.5px;width:1px;height:11.32px;background:#f0f0f0"></div>
<div style="left:654.5px;top:288.5px;width:1px;height:11.32px;background:#f0f0f0"></div>
<div style="left:713.5px;top:288.5px;width:1px;height:11.32px;background:#f0f0f0"></div>
<div style="left:763.4px;top:288.5px;width:1px;height:11.32px;background:#f0f0f0"></div>
<div style="left:834.8px;top:288.5px;width:1px;height:11.32px;background:#f0f0f0"></div>
<div style="left:891.2px;top:288.5px;width:1px;height:11.32px;background:#f0f0f0"></div>
<div style="left:941.1px;top:288.5px;width:1px;height:11.32px;background:#f0f0f0"></div>
<div style="left:962.3px;top:288.5px;width:1px;height:11.32px;background:#f0f0f0"></div>
<div style="left:436px;top:288.5px;width:25.5px;height:10.32px;background:#058a05"></div>
<div style="left:462px;top:288.5px;width:26px;height:10.32px;background:#058a05"></div>
<div class="t c" style="left:436px;width:26px;top:289.16px;display:flex;justify-content:center;color:#d8e860">167</div>
<div class="t c" style="left:462px;width:26.4px;top:289.16px;display:flex;justify-content:center;color:#d8e860">X</div>
<div style="left:488.4px;top:288.5px;width:15px;height:10.32px;background:#7d7d7d"></div>
<div style="left:537.4px;top:288.5px;width:23.600000000000023px;height:10.32px;background:#7d7d7d"></div>
<div style="left:562px;top:288.5px;width:37.39999999999998px;height:10.32px;background:#7d7d7d"></div>
<div style="left:600.4px;top:288.5px;width:54.10000000000002px;height:10.32px;background:#7d7d7d"></div>
<div style="left:655.5px;top:288.5px;width:58.0px;height:10.32px;background:#7d7d7d"></div>
<div style="left:714.5px;top:288.5px;width:48.89999999999998px;height:10.32px;background:#7d7d7d"></div>
<div style="left:764.4px;top:288.5px;width:70.39999999999998px;height:10.32px;background:#7d7d7d"></div>
<div style="left:835.8px;top:288.5px;width:55.40000000000009px;height:10.32px;background:#7d7d7d"></div>
<div class="t c" style="left:407.6px;width:28.4px;top:289.16px;display:flex;justify-content:center;color:#333">2A</div>
<div class="t c" style="left:503.5px;width:34px;top:289.16px;display:flex;justify-content:center;color:#222">-1</div>
<div class="t c" style="left:537.4px;width:24.6px;top:289.16px;display:flex;justify-content:center;color:#f0f0f0">-1</div>
<div class="t c" style="left:562px;width:38.4px;top:289.16px;display:flex;justify-content:center;color:#f0f0f0">-1</div>
<div class="t c" style="left:764.4px;width:71.4px;top:289.16px;display:flex;justify-content:center;color:#f0f0f0">-1</div>
<div class="t c" style="left:892.2px;width:49.9px;top:289.16px;display:flex;justify-content:center;color:#222">OUT-4</div>
<div class="t c" style="left:963.3px;width:41.4px;top:289.16px;display:flex;justify-content:center;color:#222">Res.</div>
<div style="left:400.5px;top:299.82px;width:7.1px;height:10.32px;background:linear-gradient(90deg,#f4f4f4,#dedede)"></div>
<div style="left:407.6px;top:310.14px;width:597px;height:1px;background:#f0f0f0"></div>
<div style="left:435px;top:299.82px;width:1px;height:11.32px;background:#f0f0f0"></div>
<div style="left:461px;top:299.82px;width:1px;height:11.32px;background:#f0f0f0"></div>
<div style="left:487.4px;top:299.82px;width:1px;height:11.32px;background:#f0f0f0"></div>
<div style="left:502.5px;top:299.82px;width:1px;height:11.32px;background:#f0f0f0"></div>
<div style="left:536.4px;top:299.82px;width:1px;height:11.32px;background:#f0f0f0"></div>
<div style="left:561px;top:299.82px;width:1px;height:11.32px;background:#f0f0f0"></div>
<div style="left:599.4px;top:299.82px;width:1px;height:11.32px;background:#f0f0f0"></div>
<div style="left:654.5px;top:299.82px;width:1px;height:11.32px;background:#f0f0f0"></div>
<div style="left:713.5px;top:299.82px;width:1px;height:11.32px;background:#f0f0f0"></div>
<div style="left:763.4px;top:299.82px;width:1px;height:11.32px;background:#f0f0f0"></div>
<div style="left:834.8px;top:299.82px;width:1px;height:11.32px;background:#f0f0f0"></div>
<div style="left:891.2px;top:299.82px;width:1px;height:11.32px;background:#f0f0f0"></div>
<div style="left:941.1px;top:299.82px;width:1px;height:11.32px;background:#f0f0f0"></div>
<div style="left:962.3px;top:299.82px;width:1px;height:11.32px;background:#f0f0f0"></div>
<div style="left:436px;top:299.82px;width:25.5px;height:10.32px;background:#058a05"></div>
<div style="left:462px;top:299.82px;width:26px;height:10.32px;background:#058a05"></div>
<div class="t c" style="left:436px;width:26px;top:300.48px;display:flex;justify-content:center;color:#d8e860">167</div>
<div class="t c" style="left:462px;width:26.4px;top:300.48px;display:flex;justify-content:center;color:#d8e860">X</div>
<div style="left:488.4px;top:299.82px;width:15px;height:10.32px;background:#1010d8"></div>
<div class="t c" style="left:488.4px;width:15px;top:300.48px;display:flex;justify-content:center;color:#f0f0ff;font-size:7px">LFN</div>
<div class="t c" style="left:407.6px;width:28.4px;top:300.48px;display:flex;justify-content:center;color:#333">3A</div>
<div class="t c" style="left:503.5px;width:34px;top:300.48px;display:flex;justify-content:center;color:#222">-1</div>
<div class="t c" style="left:537.4px;width:24.6px;top:300.48px;display:flex;justify-content:center;color:#222">-1</div>
<div class="t c" style="left:562px;width:38.4px;top:300.48px;display:flex;justify-content:center;color:#222">-1</div>
<div class="t c" style="left:764.4px;width:71.4px;top:300.48px;display:flex;justify-content:center;color:#222">-1</div>
<div class="t c" style="left:892.2px;width:49.9px;top:300.48px;display:flex;justify-content:center;color:#222">IN-1</div>
<div class="t c" style="left:963.3px;width:41.4px;top:300.48px;display:flex;justify-content:center;color:#222">1</div>
<div style="left:400.5px;top:311.14px;width:7.1px;height:10.32px;background:linear-gradient(90deg,#f4f4f4,#dedede)"></div>
<div style="left:407.6px;top:321.46px;width:597px;height:1px;background:#f0f0f0"></div>
<div style="left:435px;top:311.14px;width:1px;height:11.32px;background:#f0f0f0"></div>
<div style="left:461px;top:311.14px;width:1px;height:11.32px;background:#f0f0f0"></div>
<div style="left:487.4px;top:311.14px;width:1px;height:11.32px;background:#f0f0f0"></div>
<div style="left:502.5px;top:311.14px;width:1px;height:11.32px;background:#f0f0f0"></div>
<div style="left:536.4px;top:311.14px;width:1px;height:11.32px;background:#f0f0f0"></div>
<div style="left:561px;top:311.14px;width:1px;height:11.32px;background:#f0f0f0"></div>
<div style="left:599.4px;top:311.14px;width:1px;height:11.32px;background:#f0f0f0"></div>
<div style="left:654.5px;top:311.14px;width:1px;height:11.32px;background:#f0f0f0"></div>
<div style="left:713.5px;top:311.14px;width:1px;height:11.32px;background:#f0f0f0"></div>
<div style="left:763.4px;top:311.14px;width:1px;height:11.32px;background:#f0f0f0"></div>
<div style="left:834.8px;top:311.14px;width:1px;height:11.32px;background:#f0f0f0"></div>
<div style="left:891.2px;top:311.14px;width:1px;height:11.32px;background:#f0f0f0"></div>
<div style="left:941.1px;top:311.14px;width:1px;height:11.32px;background:#f0f0f0"></div>
<div style="left:962.3px;top:311.14px;width:1px;height:11.32px;background:#f0f0f0"></div>
<div style="left:436px;top:311.14px;width:25.5px;height:10.32px;background:#058a05"></div>
<div style="left:462px;top:311.14px;width:26px;height:10.32px;background:#058a05"></div>
<div class="t c" style="left:436px;width:26px;top:311.8px;display:flex;justify-content:center;color:#d8e860">167</div>
<div class="t c" style="left:462px;width:26.4px;top:311.8px;display:flex;justify-content:center;color:#d8e860">X</div>
<div style="left:488.4px;top:311.14px;width:15px;height:10.32px;background:#1010d8"></div>
<div class="t c" style="left:488.4px;width:15px;top:311.8px;display:flex;justify-content:center;color:#f0f0ff;font-size:7px">LFN</div>
<div class="t c" style="left:407.6px;width:28.4px;top:311.8px;display:flex;justify-content:center;color:#333">3A</div>
<div class="t c" style="left:503.5px;width:34px;top:311.8px;display:flex;justify-content:center;color:#222">-1</div>
<div class="t c" style="left:537.4px;width:24.6px;top:311.8px;display:flex;justify-content:center;color:#222">-1</div>
<div class="t c" style="left:562px;width:38.4px;top:311.8px;display:flex;justify-content:center;color:#222">-1</div>
<div class="t c" style="left:764.4px;width:71.4px;top:311.8px;display:flex;justify-content:center;color:#222">-1</div>
<div class="t c" style="left:892.2px;width:49.9px;top:311.8px;display:flex;justify-content:center;color:#222">IN-2</div>
<div class="t c" style="left:963.3px;width:41.4px;top:311.8px;display:flex;justify-content:center;color:#222">2</div>
<div style="left:400.5px;top:322.46px;width:7.1px;height:10.32px;background:linear-gradient(90deg,#f4f4f4,#dedede)"></div>
<div style="left:407.6px;top:332.78px;width:597px;height:1px;background:#f0f0f0"></div>
<div style="left:435px;top:322.46px;width:1px;height:11.32px;background:#f0f0f0"></div>
<div style="left:461px;top:322.46px;width:1px;height:11.32px;background:#f0f0f0"></div>
<div style="left:487.4px;top:322.46px;width:1px;height:11.32px;background:#f0f0f0"></div>
<div style="left:502.5px;top:322.46px;width:1px;height:11.32px;background:#f0f0f0"></div>
<div style="left:536.4px;top:322.46px;width:1px;height:11.32px;background:#f0f0f0"></div>
<div style="left:561px;top:322.46px;width:1px;height:11.32px;background:#f0f0f0"></div>
<div style="left:599.4px;top:322.46px;width:1px;height:11.32px;background:#f0f0f0"></div>
<div style="left:654.5px;top:322.46px;width:1px;height:11.32px;background:#f0f0f0"></div>
<div style="left:713.5px;top:322.46px;width:1px;height:11.32px;background:#f0f0f0"></div>
<div style="left:763.4px;top:322.46px;width:1px;height:11.32px;background:#f0f0f0"></div>
<div style="left:834.8px;top:322.46px;width:1px;height:11.32px;background:#f0f0f0"></div>
<div style="left:891.2px;top:322.46px;width:1px;height:11.32px;background:#f0f0f0"></div>
<div style="left:941.1px;top:322.46px;width:1px;height:11.32px;background:#f0f0f0"></div>
<div style="left:962.3px;top:322.46px;width:1px;height:11.32px;background:#f0f0f0"></div>
<div style="left:436px;top:322.46px;width:25.5px;height:10.32px;background:#058a05"></div>
<div style="left:462px;top:322.46px;width:26px;height:10.32px;background:#058a05"></div>
<div class="t c" style="left:436px;width:26px;top:323.12px;display:flex;justify-content:center;color:#d8e860">167</div>
<div class="t c" style="left:462px;width:26.4px;top:323.12px;display:flex;justify-content:center;color:#d8e860">X</div>
<div style="left:488.4px;top:322.46px;width:15px;height:10.32px;background:#1010d8"></div>
<div class="t c" style="left:488.4px;width:15px;top:323.12px;display:flex;justify-content:center;color:#f0f0ff;font-size:7px">LFN</div>
<div class="t c" style="left:407.6px;width:28.4px;top:323.12px;display:flex;justify-content:center;color:#333">3A</div>
<div class="t c" style="left:503.5px;width:34px;top:323.12px;display:flex;justify-content:center;color:#222">-1</div>
<div class="t c" style="left:537.4px;width:24.6px;top:323.12px;display:flex;justify-content:center;color:#222">-1</div>
<div class="t c" style="left:562px;width:38.4px;top:323.12px;display:flex;justify-content:center;color:#222">-1</div>
<div class="t c" style="left:764.4px;width:71.4px;top:323.12px;display:flex;justify-content:center;color:#222">-1</div>
<div class="t c" style="left:892.2px;width:49.9px;top:323.12px;display:flex;justify-content:center;color:#222">IN-3</div>
<div class="t c" style="left:963.3px;width:41.4px;top:323.12px;display:flex;justify-content:center;color:#222">3</div>
<div style="left:400.5px;top:333.78px;width:7.1px;height:10.32px;background:linear-gradient(90deg,#f4f4f4,#dedede)"></div>
<div style="left:407.6px;top:344.09999999999997px;width:597px;height:1px;background:#f0f0f0"></div>
<div style="left:435px;top:333.78px;width:1px;height:11.32px;background:#f0f0f0"></div>
<div style="left:461px;top:333.78px;width:1px;height:11.32px;background:#f0f0f0"></div>
<div style="left:487.4px;top:333.78px;width:1px;height:11.32px;background:#f0f0f0"></div>
<div style="left:502.5px;top:333.78px;width:1px;height:11.32px;background:#f0f0f0"></div>
<div style="left:536.4px;top:333.78px;width:1px;height:11.32px;background:#f0f0f0"></div>
<div style="left:561px;top:333.78px;width:1px;height:11.32px;background:#f0f0f0"></div>
<div style="left:599.4px;top:333.78px;width:1px;height:11.32px;background:#f0f0f0"></div>
<div style="left:654.5px;top:333.78px;width:1px;height:11.32px;background:#f0f0f0"></div>
<div style="left:713.5px;top:333.78px;width:1px;height:11.32px;background:#f0f0f0"></div>
<div style="left:763.4px;top:333.78px;width:1px;height:11.32px;background:#f0f0f0"></div>
<div style="left:834.8px;top:333.78px;width:1px;height:11.32px;background:#f0f0f0"></div>
<div style="left:891.2px;top:333.78px;width:1px;height:11.32px;background:#f0f0f0"></div>
<div style="left:941.1px;top:333.78px;width:1px;height:11.32px;background:#f0f0f0"></div>
<div style="left:962.3px;top:333.78px;width:1px;height:11.32px;background:#f0f0f0"></div>
<div style="left:436px;top:333.78px;width:25.5px;height:10.32px;background:#058a05"></div>
<div style="left:462px;top:333.78px;width:26px;height:10.32px;background:#058a05"></div>
<div class="t c" style="left:436px;width:26px;top:334.44px;display:flex;justify-content:center;color:#d8e860">167</div>
<div class="t c" style="left:462px;width:26.4px;top:334.44px;display:flex;justify-content:center;color:#d8e860">X</div>
<div style="left:488.4px;top:333.78px;width:15px;height:10.32px;background:#1010d8"></div>
<div class="t c" style="left:488.4px;width:15px;top:334.44px;display:flex;justify-content:center;color:#f0f0ff;font-size:7px">LFN</div>
<div class="t c" style="left:407.6px;width:28.4px;top:334.44px;display:flex;justify-content:center;color:#333">3A</div>
<div class="t c" style="left:503.5px;width:34px;top:334.44px;display:flex;justify-content:center;color:#222">-1</div>
<div class="t c" style="left:537.4px;width:24.6px;top:334.44px;display:flex;justify-content:center;color:#222">-1</div>
<div class="t c" style="left:562px;width:38.4px;top:334.44px;display:flex;justify-content:center;color:#222">-1</div>
<div class="t c" style="left:764.4px;width:71.4px;top:334.44px;display:flex;justify-content:center;color:#222">-1</div>
<div class="t c" style="left:892.2px;width:49.9px;top:334.44px;display:flex;justify-content:center;color:#222">IN-4</div>
<div class="t c" style="left:963.3px;width:41.4px;top:334.44px;display:flex;justify-content:center;color:#222">4</div>
<div style="left:400.5px;top:345.1px;width:7.1px;height:10.32px;background:linear-gradient(90deg,#f4f4f4,#dedede)"></div>
<div style="left:407.6px;top:355.42px;width:597px;height:1px;background:#f0f0f0"></div>
<div style="left:435px;top:345.1px;width:1px;height:11.32px;background:#f0f0f0"></div>
<div style="left:461px;top:345.1px;width:1px;height:11.32px;background:#f0f0f0"></div>
<div style="left:487.4px;top:345.1px;width:1px;height:11.32px;background:#f0f0f0"></div>
<div style="left:502.5px;top:345.1px;width:1px;height:11.32px;background:#f0f0f0"></div>
<div style="left:536.4px;top:345.1px;width:1px;height:11.32px;background:#f0f0f0"></div>
<div style="left:561px;top:345.1px;width:1px;height:11.32px;background:#f0f0f0"></div>
<div style="left:599.4px;top:345.1px;width:1px;height:11.32px;background:#f0f0f0"></div>
<div style="left:654.5px;top:345.1px;width:1px;height:11.32px;background:#f0f0f0"></div>
<div style="left:713.5px;top:345.1px;width:1px;height:11.32px;background:#f0f0f0"></div>
<div style="left:763.4px;top:345.1px;width:1px;height:11.32px;background:#f0f0f0"></div>
<div style="left:834.8px;top:345.1px;width:1px;height:11.32px;background:#f0f0f0"></div>
<div style="left:891.2px;top:345.1px;width:1px;height:11.32px;background:#f0f0f0"></div>
<div style="left:941.1px;top:345.1px;width:1px;height:11.32px;background:#f0f0f0"></div>
<div style="left:962.3px;top:345.1px;width:1px;height:11.32px;background:#f0f0f0"></div>
<div style="left:436px;top:345.1px;width:25.5px;height:10.32px;background:#058a05"></div>
<div style="left:462px;top:345.1px;width:26px;height:10.32px;background:#058a05"></div>
<div class="t c" style="left:436px;width:26px;top:345.76000000000005px;display:flex;justify-content:center;color:#d8e860">167</div>
<div class="t c" style="left:462px;width:26.4px;top:345.76000000000005px;display:flex;justify-content:center;color:#d8e860">X</div>
<div style="left:488.4px;top:345.1px;width:15px;height:10.32px;background:#7d7d7d"></div>
<div style="left:537.4px;top:345.1px;width:23.600000000000023px;height:10.32px;background:#7d7d7d"></div>
<div style="left:562px;top:345.1px;width:37.39999999999998px;height:10.32px;background:#7d7d7d"></div>
<div style="left:600.4px;top:345.1px;width:54.10000000000002px;height:10.32px;background:#7d7d7d"></div>
<div style="left:655.5px;top:345.1px;width:58.0px;height:10.32px;background:#7d7d7d"></div>
<div style="left:714.5px;top:345.1px;width:48.89999999999998px;height:10.32px;background:#7d7d7d"></div>
<div style="left:764.4px;top:345.1px;width:70.39999999999998px;height:10.32px;background:#7d7d7d"></div>
<div style="left:835.8px;top:345.1px;width:55.40000000000009px;height:10.32px;background:#7d7d7d"></div>
<div class="t c" style="left:407.6px;width:28.4px;top:345.76000000000005px;display:flex;justify-content:center;color:#333">3A</div>
<div class="t c" style="left:503.5px;width:34px;top:345.76000000000005px;display:flex;justify-content:center;color:#222">-1</div>
<div class="t c" style="left:537.4px;width:24.6px;top:345.76000000000005px;display:flex;justify-content:center;color:#f0f0f0">-1</div>
<div class="t c" style="left:562px;width:38.4px;top:345.76000000000005px;display:flex;justify-content:center;color:#f0f0f0">-1</div>
<div class="t c" style="left:764.4px;width:71.4px;top:345.76000000000005px;display:flex;justify-content:center;color:#f0f0f0">-1</div>
<div class="t c" style="left:892.2px;width:49.9px;top:345.76000000000005px;display:flex;justify-content:center;color:#222">OUT-1</div>
<div class="t c" style="left:963.3px;width:41.4px;top:345.76000000000005px;display:flex;justify-content:center;color:#222">Res.</div>
<div style="left:400.5px;top:356.42px;width:7.1px;height:10.32px;background:linear-gradient(90deg,#f4f4f4,#dedede)"></div>
<div style="left:407.6px;top:366.74px;width:597px;height:1px;background:#f0f0f0"></div>
<div style="left:435px;top:356.42px;width:1px;height:11.32px;background:#f0f0f0"></div>
<div style="left:461px;top:356.42px;width:1px;height:11.32px;background:#f0f0f0"></div>
<div style="left:487.4px;top:356.42px;width:1px;height:11.32px;background:#f0f0f0"></div>
<div style="left:502.5px;top:356.42px;width:1px;height:11.32px;background:#f0f0f0"></div>
<div style="left:536.4px;top:356.42px;width:1px;height:11.32px;background:#f0f0f0"></div>
<div style="left:561px;top:356.42px;width:1px;height:11.32px;background:#f0f0f0"></div>
<div style="left:599.4px;top:356.42px;width:1px;height:11.32px;background:#f0f0f0"></div>
<div style="left:654.5px;top:356.42px;width:1px;height:11.32px;background:#f0f0f0"></div>
<div style="left:713.5px;top:356.42px;width:1px;height:11.32px;background:#f0f0f0"></div>
<div style="left:763.4px;top:356.42px;width:1px;height:11.32px;background:#f0f0f0"></div>
<div style="left:834.8px;top:356.42px;width:1px;height:11.32px;background:#f0f0f0"></div>
<div style="left:891.2px;top:356.42px;width:1px;height:11.32px;background:#f0f0f0"></div>
<div style="left:941.1px;top:356.42px;width:1px;height:11.32px;background:#f0f0f0"></div>
<div style="left:962.3px;top:356.42px;width:1px;height:11.32px;background:#f0f0f0"></div>
<div style="left:436px;top:356.42px;width:25.5px;height:10.32px;background:#058a05"></div>
<div style="left:462px;top:356.42px;width:26px;height:10.32px;background:#058a05"></div>
<div class="t c" style="left:436px;width:26px;top:357.08000000000004px;display:flex;justify-content:center;color:#d8e860">167</div>
<div class="t c" style="left:462px;width:26.4px;top:357.08000000000004px;display:flex;justify-content:center;color:#d8e860">X</div>
<div style="left:488.4px;top:356.42px;width:15px;height:10.32px;background:#7d7d7d"></div>
<div style="left:537.4px;top:356.42px;width:23.600000000000023px;height:10.32px;background:#7d7d7d"></div>
<div style="left:562px;top:356.42px;width:37.39999999999998px;height:10.32px;background:#7d7d7d"></div>
<div style="left:600.4px;top:356.42px;width:54.10000000000002px;height:10.32px;background:#7d7d7d"></div>
<div style="left:655.5px;top:356.42px;width:58.0px;height:10.32px;background:#7d7d7d"></div>
<div style="left:714.5px;top:356.42px;width:48.89999999999998px;height:10.32px;background:#7d7d7d"></div>
<div style="left:764.4px;top:356.42px;width:70.39999999999998px;height:10.32px;background:#7d7d7d"></div>
<div style="left:835.8px;top:356.42px;width:55.40000000000009px;height:10.32px;background:#7d7d7d"></div>
<div class="t c" style="left:407.6px;width:28.4px;top:357.08000000000004px;display:flex;justify-content:center;color:#333">3A</div>
<div class="t c" style="left:503.5px;width:34px;top:357.08000000000004px;display:flex;justify-content:center;color:#222">-1</div>
<div class="t c" style="left:537.4px;width:24.6px;top:357.08000000000004px;display:flex;justify-content:center;color:#f0f0f0">-1</div>
<div class="t c" style="left:562px;width:38.4px;top:357.08000000000004px;display:flex;justify-content:center;color:#f0f0f0">-1</div>
<div class="t c" style="left:764.4px;width:71.4px;top:357.08000000000004px;display:flex;justify-content:center;color:#f0f0f0">-1</div>
<div class="t c" style="left:892.2px;width:49.9px;top:357.08000000000004px;display:flex;justify-content:center;color:#222">OUT-2</div>
<div class="t c" style="left:963.3px;width:41.4px;top:357.08000000000004px;display:flex;justify-content:center;color:#222">Res.</div>
<div style="left:400.5px;top:367.74px;width:7.1px;height:10.32px;background:linear-gradient(90deg,#f4f4f4,#dedede)"></div>
<div style="left:407.6px;top:378.06px;width:597px;height:1px;background:#f0f0f0"></div>
<div style="left:435px;top:367.74px;width:1px;height:11.32px;background:#f0f0f0"></div>
<div style="left:461px;top:367.74px;width:1px;height:11.32px;background:#f0f0f0"></div>
<div style="left:487.4px;top:367.74px;width:1px;height:11.32px;background:#f0f0f0"></div>
<div style="left:502.5px;top:367.74px;width:1px;height:11.32px;background:#f0f0f0"></div>
<div style="left:536.4px;top:367.74px;width:1px;height:11.32px;background:#f0f0f0"></div>
<div style="left:561px;top:367.74px;width:1px;height:11.32px;background:#f0f0f0"></div>
<div style="left:599.4px;top:367.74px;width:1px;height:11.32px;background:#f0f0f0"></div>
<div style="left:654.5px;top:367.74px;width:1px;height:11.32px;background:#f0f0f0"></div>
<div style="left:713.5px;top:367.74px;width:1px;height:11.32px;background:#f0f0f0"></div>
<div style="left:763.4px;top:367.74px;width:1px;height:11.32px;background:#f0f0f0"></div>
<div style="left:834.8px;top:367.74px;width:1px;height:11.32px;background:#f0f0f0"></div>
<div style="left:891.2px;top:367.74px;width:1px;height:11.32px;background:#f0f0f0"></div>
<div style="left:941.1px;top:367.74px;width:1px;height:11.32px;background:#f0f0f0"></div>
<div style="left:962.3px;top:367.74px;width:1px;height:11.32px;background:#f0f0f0"></div>
<div style="left:436px;top:367.74px;width:25.5px;height:10.32px;background:#058a05"></div>
<div style="left:462px;top:367.74px;width:26px;height:10.32px;background:#058a05"></div>
<div class="t c" style="left:436px;width:26px;top:368.40000000000003px;display:flex;justify-content:center;color:#d8e860">167</div>
<div class="t c" style="left:462px;width:26.4px;top:368.40000000000003px;display:flex;justify-content:center;color:#d8e860">X</div>
<div style="left:488.4px;top:367.74px;width:15px;height:10.32px;background:#7d7d7d"></div>
<div style="left:537.4px;top:367.74px;width:23.600000000000023px;height:10.32px;background:#7d7d7d"></div>
<div style="left:562px;top:367.74px;width:37.39999999999998px;height:10.32px;background:#7d7d7d"></div>
<div style="left:600.4px;top:367.74px;width:54.10000000000002px;height:10.32px;background:#7d7d7d"></div>
<div style="left:655.5px;top:367.74px;width:58.0px;height:10.32px;background:#7d7d7d"></div>
<div style="left:714.5px;top:367.74px;width:48.89999999999998px;height:10.32px;background:#7d7d7d"></div>
<div style="left:764.4px;top:367.74px;width:70.39999999999998px;height:10.32px;background:#7d7d7d"></div>
<div style="left:835.8px;top:367.74px;width:55.40000000000009px;height:10.32px;background:#7d7d7d"></div>
<div class="t c" style="left:407.6px;width:28.4px;top:368.40000000000003px;display:flex;justify-content:center;color:#333">3A</div>
<div class="t c" style="left:503.5px;width:34px;top:368.40000000000003px;display:flex;justify-content:center;color:#222">-1</div>
<div class="t c" style="left:537.4px;width:24.6px;top:368.40000000000003px;display:flex;justify-content:center;color:#f0f0f0">-1</div>
<div class="t c" style="left:562px;width:38.4px;top:368.40000000000003px;display:flex;justify-content:center;color:#f0f0f0">-1</div>
<div class="t c" style="left:764.4px;width:71.4px;top:368.40000000000003px;display:flex;justify-content:center;color:#f0f0f0">-1</div>
<div class="t c" style="left:892.2px;width:49.9px;top:368.40000000000003px;display:flex;justify-content:center;color:#222">OUT-3</div>
<div class="t c" style="left:963.3px;width:41.4px;top:368.40000000000003px;display:flex;justify-content:center;color:#222">Res.</div>
<div style="left:400.5px;top:379.06px;width:7.1px;height:10.32px;background:linear-gradient(90deg,#f4f4f4,#dedede)"></div>
<div style="left:407.6px;top:389.38px;width:597px;height:1px;background:#f0f0f0"></div>
<div style="left:435px;top:379.06px;width:1px;height:11.32px;background:#f0f0f0"></div>
<div style="left:461px;top:379.06px;width:1px;height:11.32px;background:#f0f0f0"></div>
<div style="left:487.4px;top:379.06px;width:1px;height:11.32px;background:#f0f0f0"></div>
<div style="left:502.5px;top:379.06px;width:1px;height:11.32px;background:#f0f0f0"></div>
<div style="left:536.4px;top:379.06px;width:1px;height:11.32px;background:#f0f0f0"></div>
<div style="left:561px;top:379.06px;width:1px;height:11.32px;background:#f0f0f0"></div>
<div style="left:599.4px;top:379.06px;width:1px;height:11.32px;background:#f0f0f0"></div>
<div style="left:654.5px;top:379.06px;width:1px;height:11.32px;background:#f0f0f0"></div>
<div style="left:713.5px;top:379.06px;width:1px;height:11.32px;background:#f0f0f0"></div>
<div style="left:763.4px;top:379.06px;width:1px;height:11.32px;background:#f0f0f0"></div>
<div style="left:834.8px;top:379.06px;width:1px;height:11.32px;background:#f0f0f0"></div>
<div style="left:891.2px;top:379.06px;width:1px;height:11.32px;background:#f0f0f0"></div>
<div style="left:941.1px;top:379.06px;width:1px;height:11.32px;background:#f0f0f0"></div>
<div style="left:962.3px;top:379.06px;width:1px;height:11.32px;background:#f0f0f0"></div>
<div style="left:436px;top:379.06px;width:25.5px;height:10.32px;background:#058a05"></div>
<div style="left:462px;top:379.06px;width:26px;height:10.32px;background:#058a05"></div>
<div class="t c" style="left:436px;width:26px;top:379.72px;display:flex;justify-content:center;color:#d8e860">167</div>
<div class="t c" style="left:462px;width:26.4px;top:379.72px;display:flex;justify-content:center;color:#d8e860">X</div>
<div style="left:488.4px;top:379.06px;width:15px;height:10.32px;background:#7d7d7d"></div>
<div style="left:537.4px;top:379.06px;width:23.600000000000023px;height:10.32px;background:#7d7d7d"></div>
<div style="left:562px;top:379.06px;width:37.39999999999998px;height:10.32px;background:#7d7d7d"></div>
<div style="left:600.4px;top:379.06px;width:54.10000000000002px;height:10.32px;background:#7d7d7d"></div>
<div style="left:655.5px;top:379.06px;width:58.0px;height:10.32px;background:#7d7d7d"></div>
<div style="left:714.5px;top:379.06px;width:48.89999999999998px;height:10.32px;background:#7d7d7d"></div>
<div style="left:764.4px;top:379.06px;width:70.39999999999998px;height:10.32px;background:#7d7d7d"></div>
<div style="left:835.8px;top:379.06px;width:55.40000000000009px;height:10.32px;background:#7d7d7d"></div>
<div class="t c" style="left:407.6px;width:28.4px;top:379.72px;display:flex;justify-content:center;color:#333">3A</div>
<div class="t c" style="left:503.5px;width:34px;top:379.72px;display:flex;justify-content:center;color:#222">-1</div>
<div class="t c" style="left:537.4px;width:24.6px;top:379.72px;display:flex;justify-content:center;color:#f0f0f0">-1</div>
<div class="t c" style="left:562px;width:38.4px;top:379.72px;display:flex;justify-content:center;color:#f0f0f0">-1</div>
<div class="t c" style="left:764.4px;width:71.4px;top:379.72px;display:flex;justify-content:center;color:#f0f0f0">-1</div>
<div class="t c" style="left:892.2px;width:49.9px;top:379.72px;display:flex;justify-content:center;color:#222">OUT-4</div>
<div class="t c" style="left:963.3px;width:41.4px;top:379.72px;display:flex;justify-content:center;color:#222">Res.</div>
<div style="left:400.5px;top:390.38px;width:7.1px;height:10.32px;background:linear-gradient(90deg,#f4f4f4,#dedede)"></div>
<div style="left:407.6px;top:400.7px;width:597px;height:1px;background:#f0f0f0"></div>
<div style="left:435px;top:390.38px;width:1px;height:11.32px;background:#f0f0f0"></div>
<div style="left:461px;top:390.38px;width:1px;height:11.32px;background:#f0f0f0"></div>
<div style="left:487.4px;top:390.38px;width:1px;height:11.32px;background:#f0f0f0"></div>
<div style="left:502.5px;top:390.38px;width:1px;height:11.32px;background:#f0f0f0"></div>
<div style="left:536.4px;top:390.38px;width:1px;height:11.32px;background:#f0f0f0"></div>
<div style="left:561px;top:390.38px;width:1px;height:11.32px;background:#f0f0f0"></div>
<div style="left:599.4px;top:390.38px;width:1px;height:11.32px;background:#f0f0f0"></div>
<div style="left:654.5px;top:390.38px;width:1px;height:11.32px;background:#f0f0f0"></div>
<div style="left:713.5px;top:390.38px;width:1px;height:11.32px;background:#f0f0f0"></div>
<div style="left:763.4px;top:390.38px;width:1px;height:11.32px;background:#f0f0f0"></div>
<div style="left:834.8px;top:390.38px;width:1px;height:11.32px;background:#f0f0f0"></div>
<div style="left:891.2px;top:390.38px;width:1px;height:11.32px;background:#f0f0f0"></div>
<div style="left:941.1px;top:390.38px;width:1px;height:11.32px;background:#f0f0f0"></div>
<div style="left:962.3px;top:390.38px;width:1px;height:11.32px;background:#f0f0f0"></div>
<div style="left:436px;top:390.38px;width:25.5px;height:10.32px;background:#058a05"></div>
<div style="left:462px;top:390.38px;width:26px;height:10.32px;background:#058a05"></div>
<div class="t c" style="left:436px;width:26px;top:391.04px;display:flex;justify-content:center;color:#d8e860">167</div>
<div class="t c" style="left:462px;width:26.4px;top:391.04px;display:flex;justify-content:center;color:#d8e860">X</div>
<div class="t c" style="left:407.6px;width:28.4px;top:391.04px;display:flex;justify-content:center;color:#333">4A</div>
<div class="t c" style="left:503.5px;width:34px;top:391.04px;display:flex;justify-content:center;color:#222">-1</div>
<div class="t c" style="left:537.4px;width:24.6px;top:391.04px;display:flex;justify-content:center;color:#222">-1</div>
<div class="t c" style="left:562px;width:38.4px;top:391.04px;display:flex;justify-content:center;color:#222">-1</div>
<div class="t c" style="left:764.4px;width:71.4px;top:391.04px;display:flex;justify-content:center;color:#222">-1</div>
<div class="t c" style="left:892.2px;width:49.9px;top:391.04px;display:flex;justify-content:center;color:#222">IN-1</div>
<div class="t c" style="left:963.3px;width:41.4px;top:391.04px;display:flex;justify-content:center;color:#222">Res.</div>
<div style="left:400.5px;top:401.7px;width:7.1px;height:10.32px;background:linear-gradient(90deg,#f4f4f4,#dedede)"></div>
<div style="left:407.6px;top:412.02px;width:597px;height:1px;background:#f0f0f0"></div>
<div style="left:435px;top:401.7px;width:1px;height:11.32px;background:#f0f0f0"></div>
<div style="left:461px;top:401.7px;width:1px;height:11.32px;background:#f0f0f0"></div>
<div style="left:487.4px;top:401.7px;width:1px;height:11.32px;background:#f0f0f0"></div>
<div style="left:502.5px;top:401.7px;width:1px;height:11.32px;background:#f0f0f0"></div>
<div style="left:536.4px;top:401.7px;width:1px;height:11.32px;background:#f0f0f0"></div>
<div style="left:561px;top:401.7px;width:1px;height:11.32px;background:#f0f0f0"></div>
<div style="left:599.4px;top:401.7px;width:1px;height:11.32px;background:#f0f0f0"></div>
<div style="left:654.5px;top:401.7px;width:1px;height:11.32px;background:#f0f0f0"></div>
<div style="left:713.5px;top:401.7px;width:1px;height:11.32px;background:#f0f0f0"></div>
<div style="left:763.4px;top:401.7px;width:1px;height:11.32px;background:#f0f0f0"></div>
<div style="left:834.8px;top:401.7px;width:1px;height:11.32px;background:#f0f0f0"></div>
<div style="left:891.2px;top:401.7px;width:1px;height:11.32px;background:#f0f0f0"></div>
<div style="left:941.1px;top:401.7px;width:1px;height:11.32px;background:#f0f0f0"></div>
<div style="left:962.3px;top:401.7px;width:1px;height:11.32px;background:#f0f0f0"></div>
<div style="left:436px;top:401.7px;width:25.5px;height:10.32px;background:#058a05"></div>
<div style="left:462px;top:401.7px;width:26px;height:10.32px;background:#058a05"></div>
<div class="t c" style="left:436px;width:26px;top:402.36px;display:flex;justify-content:center;color:#d8e860">167</div>
<div class="t c" style="left:462px;width:26.4px;top:402.36px;display:flex;justify-content:center;color:#d8e860">X</div>
<div class="t c" style="left:407.6px;width:28.4px;top:402.36px;display:flex;justify-content:center;color:#333">4A</div>
<div class="t c" style="left:503.5px;width:34px;top:402.36px;display:flex;justify-content:center;color:#222">-1</div>
<div class="t c" style="left:537.4px;width:24.6px;top:402.36px;display:flex;justify-content:center;color:#222">-1</div>
<div class="t c" style="left:562px;width:38.4px;top:402.36px;display:flex;justify-content:center;color:#222">-1</div>
<div class="t c" style="left:764.4px;width:71.4px;top:402.36px;display:flex;justify-content:center;color:#222">-1</div>
<div class="t c" style="left:892.2px;width:49.9px;top:402.36px;display:flex;justify-content:center;color:#222">IN-2</div>
<div class="t c" style="left:963.3px;width:41.4px;top:402.36px;display:flex;justify-content:center;color:#222">Res.</div>
<div style="left:400.5px;top:413.02px;width:7.1px;height:10.32px;background:linear-gradient(90deg,#f4f4f4,#dedede)"></div>
<div style="left:407.6px;top:423.34px;width:597px;height:1px;background:#f0f0f0"></div>
<div style="left:435px;top:413.02px;width:1px;height:11.32px;background:#f0f0f0"></div>
<div style="left:461px;top:413.02px;width:1px;height:11.32px;background:#f0f0f0"></div>
<div style="left:487.4px;top:413.02px;width:1px;height:11.32px;background:#f0f0f0"></div>
<div style="left:502.5px;top:413.02px;width:1px;height:11.32px;background:#f0f0f0"></div>
<div style="left:536.4px;top:413.02px;width:1px;height:11.32px;background:#f0f0f0"></div>
<div style="left:561px;top:413.02px;width:1px;height:11.32px;background:#f0f0f0"></div>
<div style="left:599.4px;top:413.02px;width:1px;height:11.32px;background:#f0f0f0"></div>
<div style="left:654.5px;top:413.02px;width:1px;height:11.32px;background:#f0f0f0"></div>
<div style="left:713.5px;top:413.02px;width:1px;height:11.32px;background:#f0f0f0"></div>
<div style="left:763.4px;top:413.02px;width:1px;height:11.32px;background:#f0f0f0"></div>
<div style="left:834.8px;top:413.02px;width:1px;height:11.32px;background:#f0f0f0"></div>
<div style="left:891.2px;top:413.02px;width:1px;height:11.32px;background:#f0f0f0"></div>
<div style="left:941.1px;top:413.02px;width:1px;height:11.32px;background:#f0f0f0"></div>
<div style="left:962.3px;top:413.02px;width:1px;height:11.32px;background:#f0f0f0"></div>
<div style="left:436px;top:413.02px;width:25.5px;height:10.32px;background:#058a05"></div>
<div style="left:462px;top:413.02px;width:26px;height:10.32px;background:#058a05"></div>
<div class="t c" style="left:436px;width:26px;top:413.68px;display:flex;justify-content:center;color:#d8e860">167</div>
<div class="t c" style="left:462px;width:26.4px;top:413.68px;display:flex;justify-content:center;color:#d8e860">X</div>
<div class="t c" style="left:407.6px;width:28.4px;top:413.68px;display:flex;justify-content:center;color:#333">4A</div>
<div class="t c" style="left:503.5px;width:34px;top:413.68px;display:flex;justify-content:center;color:#222">-1</div>
<div class="t c" style="left:537.4px;width:24.6px;top:413.68px;display:flex;justify-content:center;color:#222">1</div>
<div class="t c" style="left:562px;width:38.4px;top:413.68px;display:flex;justify-content:center;color:#222">64</div>
<div class="t c" style="left:764.4px;width:71.4px;top:413.68px;display:flex;justify-content:center;color:#222">-1</div>
<div class="t c" style="left:655.5px;width:59px;top:413.68px;display:flex;justify-content:center;color:#111;font-weight:bold">X</div>
<div class="t c" style="left:892.2px;width:49.9px;top:413.68px;display:flex;justify-content:center;color:#222">IN-3</div>
<div style="left:942.1px;top:413.02px;width:21px;height:11.32px;background:#f4f400"></div>
<div class="t c" style="left:942.1px;width:21.2px;top:413.68px;display:flex;justify-content:center;color:#333">X</div>
<div class="t c" style="left:963.3px;width:41.4px;top:413.68px;display:flex;justify-content:center;color:#222">-5B4.3A</div>
<div style="left:400.5px;top:424.34000000000003px;width:7.1px;height:10.32px;background:linear-gradient(90deg,#f4f4f4,#dedede)"></div>
<div style="left:407.6px;top:434.66px;width:597px;height:1px;background:#f0f0f0"></div>
<div style="left:435px;top:424.34000000000003px;width:1px;height:11.32px;background:#f0f0f0"></div>
<div style="left:461px;top:424.34000000000003px;width:1px;height:11.32px;background:#f0f0f0"></div>
<div style="left:487.4px;top:424.34000000000003px;width:1px;height:11.32px;background:#f0f0f0"></div>
<div style="left:502.5px;top:424.34000000000003px;width:1px;height:11.32px;background:#f0f0f0"></div>
<div style="left:536.4px;top:424.34000000000003px;width:1px;height:11.32px;background:#f0f0f0"></div>
<div style="left:561px;top:424.34000000000003px;width:1px;height:11.32px;background:#f0f0f0"></div>
<div style="left:599.4px;top:424.34000000000003px;width:1px;height:11.32px;background:#f0f0f0"></div>
<div style="left:654.5px;top:424.34000000000003px;width:1px;height:11.32px;background:#f0f0f0"></div>
<div style="left:713.5px;top:424.34000000000003px;width:1px;height:11.32px;background:#f0f0f0"></div>
<div style="left:763.4px;top:424.34000000000003px;width:1px;height:11.32px;background:#f0f0f0"></div>
<div style="left:834.8px;top:424.34000000000003px;width:1px;height:11.32px;background:#f0f0f0"></div>
<div style="left:891.2px;top:424.34000000000003px;width:1px;height:11.32px;background:#f0f0f0"></div>
<div style="left:941.1px;top:424.34000000000003px;width:1px;height:11.32px;background:#f0f0f0"></div>
<div style="left:962.3px;top:424.34000000000003px;width:1px;height:11.32px;background:#f0f0f0"></div>
<div style="left:436px;top:424.34000000000003px;width:25.5px;height:10.32px;background:#058a05"></div>
<div style="left:462px;top:424.34000000000003px;width:26px;height:10.32px;background:#058a05"></div>
<div class="t c" style="left:436px;width:26px;top:425.00000000000006px;display:flex;justify-content:center;color:#d8e860">167</div>
<div class="t c" style="left:462px;width:26.4px;top:425.00000000000006px;display:flex;justify-content:center;color:#d8e860">X</div>
<div class="t c" style="left:407.6px;width:28.4px;top:425.00000000000006px;display:flex;justify-content:center;color:#333">4A</div>
<div class="t c" style="left:503.5px;width:34px;top:425.00000000000006px;display:flex;justify-content:center;color:#222">-1</div>
<div class="t c" style="left:537.4px;width:24.6px;top:425.00000000000006px;display:flex;justify-content:center;color:#222">1</div>
<div class="t c" style="left:562px;width:38.4px;top:425.00000000000006px;display:flex;justify-content:center;color:#222">64</div>
<div class="t c" style="left:764.4px;width:71.4px;top:425.00000000000006px;display:flex;justify-content:center;color:#222">-1</div>
<div class="t c" style="left:655.5px;width:59px;top:425.00000000000006px;display:flex;justify-content:center;color:#111;font-weight:bold">X</div>
<div class="t c" style="left:892.2px;width:49.9px;top:425.00000000000006px;display:flex;justify-content:center;color:#222">IN-4</div>
<div style="left:942.1px;top:424.34000000000003px;width:21px;height:11.32px;background:#f4f400"></div>
<div class="t c" style="left:942.1px;width:21.2px;top:425.00000000000006px;display:flex;justify-content:center;color:#333">X</div>
<div class="t c" style="left:963.3px;width:41.4px;top:425.00000000000006px;display:flex;justify-content:center;color:#222">-5B4.4A</div>
<div style="left:400.5px;top:435.65999999999997px;width:7.1px;height:10.32px;background:linear-gradient(90deg,#f4f4f4,#dedede)"></div>
<div style="left:407.6px;top:445.97999999999996px;width:597px;height:1px;background:#f0f0f0"></div>
<div style="left:435px;top:435.65999999999997px;width:1px;height:11.32px;background:#f0f0f0"></div>
<div style="left:461px;top:435.65999999999997px;width:1px;height:11.32px;background:#f0f0f0"></div>
<div style="left:487.4px;top:435.65999999999997px;width:1px;height:11.32px;background:#f0f0f0"></div>
<div style="left:502.5px;top:435.65999999999997px;width:1px;height:11.32px;background:#f0f0f0"></div>
<div style="left:536.4px;top:435.65999999999997px;width:1px;height:11.32px;background:#f0f0f0"></div>
<div style="left:561px;top:435.65999999999997px;width:1px;height:11.32px;background:#f0f0f0"></div>
<div style="left:599.4px;top:435.65999999999997px;width:1px;height:11.32px;background:#f0f0f0"></div>
<div style="left:654.5px;top:435.65999999999997px;width:1px;height:11.32px;background:#f0f0f0"></div>
<div style="left:713.5px;top:435.65999999999997px;width:1px;height:11.32px;background:#f0f0f0"></div>
<div style="left:763.4px;top:435.65999999999997px;width:1px;height:11.32px;background:#f0f0f0"></div>
<div style="left:834.8px;top:435.65999999999997px;width:1px;height:11.32px;background:#f0f0f0"></div>
<div style="left:891.2px;top:435.65999999999997px;width:1px;height:11.32px;background:#f0f0f0"></div>
<div style="left:941.1px;top:435.65999999999997px;width:1px;height:11.32px;background:#f0f0f0"></div>
<div style="left:962.3px;top:435.65999999999997px;width:1px;height:11.32px;background:#f0f0f0"></div>
<div style="left:436px;top:435.65999999999997px;width:25.5px;height:10.32px;background:#058a05"></div>
<div style="left:462px;top:435.65999999999997px;width:26px;height:10.32px;background:#058a05"></div>
<div class="t c" style="left:436px;width:26px;top:436.32px;display:flex;justify-content:center;color:#d8e860">167</div>
<div class="t c" style="left:462px;width:26.4px;top:436.32px;display:flex;justify-content:center;color:#d8e860">X</div>
<div style="left:488.4px;top:435.65999999999997px;width:15px;height:10.32px;background:#7d7d7d"></div>
<div style="left:537.4px;top:435.65999999999997px;width:23.600000000000023px;height:10.32px;background:#7d7d7d"></div>
<div style="left:562px;top:435.65999999999997px;width:37.39999999999998px;height:10.32px;background:#7d7d7d"></div>
<div style="left:600.4px;top:435.65999999999997px;width:54.10000000000002px;height:10.32px;background:#7d7d7d"></div>
<div style="left:655.5px;top:435.65999999999997px;width:58.0px;height:10.32px;background:#7d7d7d"></div>
<div style="left:714.5px;top:435.65999999999997px;width:48.89999999999998px;height:10.32px;background:#7d7d7d"></div>
<div style="left:764.4px;top:435.65999999999997px;width:70.39999999999998px;height:10.32px;background:#7d7d7d"></div>
<div style="left:835.8px;top:435.65999999999997px;width:55.40000000000009px;height:10.32px;background:#7d7d7d"></div>
<div class="t c" style="left:407.6px;width:28.4px;top:436.32px;display:flex;justify-content:center;color:#333">4A</div>
<div class="t c" style="left:503.5px;width:34px;top:436.32px;display:flex;justify-content:center;color:#222">-1</div>
<div class="t c" style="left:537.4px;width:24.6px;top:436.32px;display:flex;justify-content:center;color:#f0f0f0">-1</div>
<div class="t c" style="left:562px;width:38.4px;top:436.32px;display:flex;justify-content:center;color:#f0f0f0">-1</div>
<div class="t c" style="left:764.4px;width:71.4px;top:436.32px;display:flex;justify-content:center;color:#f0f0f0">-1</div>
<div class="t c" style="left:892.2px;width:49.9px;top:436.32px;display:flex;justify-content:center;color:#222">OUT-1</div>
<div style="left:942.1px;top:435.65999999999997px;width:21px;height:11.32px;background:#f4f400"></div>
<div class="t c" style="left:942.1px;width:21.2px;top:436.32px;display:flex;justify-content:center;color:#333">X</div>
<div class="t c" style="left:963.3px;width:41.4px;top:436.32px;display:flex;justify-content:center;color:#222">-5Y4.1A</div>
<div style="left:400.5px;top:446.98px;width:7.1px;height:10.32px;background:linear-gradient(90deg,#f4f4f4,#dedede)"></div>
<div style="left:407.6px;top:457.3px;width:597px;height:1px;background:#f0f0f0"></div>
<div style="left:435px;top:446.98px;width:1px;height:11.32px;background:#f0f0f0"></div>
<div style="left:461px;top:446.98px;width:1px;height:11.32px;background:#f0f0f0"></div>
<div style="left:487.4px;top:446.98px;width:1px;height:11.32px;background:#f0f0f0"></div>
<div style="left:502.5px;top:446.98px;width:1px;height:11.32px;background:#f0f0f0"></div>
<div style="left:536.4px;top:446.98px;width:1px;height:11.32px;background:#f0f0f0"></div>
<div style="left:561px;top:446.98px;width:1px;height:11.32px;background:#f0f0f0"></div>
<div style="left:599.4px;top:446.98px;width:1px;height:11.32px;background:#f0f0f0"></div>
<div style="left:654.5px;top:446.98px;width:1px;height:11.32px;background:#f0f0f0"></div>
<div style="left:713.5px;top:446.98px;width:1px;height:11.32px;background:#f0f0f0"></div>
<div style="left:763.4px;top:446.98px;width:1px;height:11.32px;background:#f0f0f0"></div>
<div style="left:834.8px;top:446.98px;width:1px;height:11.32px;background:#f0f0f0"></div>
<div style="left:891.2px;top:446.98px;width:1px;height:11.32px;background:#f0f0f0"></div>
<div style="left:941.1px;top:446.98px;width:1px;height:11.32px;background:#f0f0f0"></div>
<div style="left:962.3px;top:446.98px;width:1px;height:11.32px;background:#f0f0f0"></div>
<div style="left:436px;top:446.98px;width:25.5px;height:10.32px;background:#058a05"></div>
<div style="left:462px;top:446.98px;width:26px;height:10.32px;background:#058a05"></div>
<div class="t c" style="left:436px;width:26px;top:447.64000000000004px;display:flex;justify-content:center;color:#d8e860">167</div>
<div class="t c" style="left:462px;width:26.4px;top:447.64000000000004px;display:flex;justify-content:center;color:#d8e860">X</div>
<div style="left:488.4px;top:446.98px;width:15px;height:10.32px;background:#7d7d7d"></div>
<div style="left:537.4px;top:446.98px;width:23.600000000000023px;height:10.32px;background:#7d7d7d"></div>
<div style="left:562px;top:446.98px;width:37.39999999999998px;height:10.32px;background:#7d7d7d"></div>
<div style="left:600.4px;top:446.98px;width:54.10000000000002px;height:10.32px;background:#7d7d7d"></div>
<div style="left:655.5px;top:446.98px;width:58.0px;height:10.32px;background:#7d7d7d"></div>
<div style="left:714.5px;top:446.98px;width:48.89999999999998px;height:10.32px;background:#7d7d7d"></div>
<div style="left:764.4px;top:446.98px;width:70.39999999999998px;height:10.32px;background:#7d7d7d"></div>
<div style="left:835.8px;top:446.98px;width:55.40000000000009px;height:10.32px;background:#7d7d7d"></div>
<div class="t c" style="left:407.6px;width:28.4px;top:447.64000000000004px;display:flex;justify-content:center;color:#333">4A</div>
<div class="t c" style="left:503.5px;width:34px;top:447.64000000000004px;display:flex;justify-content:center;color:#222">-1</div>
<div class="t c" style="left:537.4px;width:24.6px;top:447.64000000000004px;display:flex;justify-content:center;color:#f0f0f0">-1</div>
<div class="t c" style="left:562px;width:38.4px;top:447.64000000000004px;display:flex;justify-content:center;color:#f0f0f0">-1</div>
<div class="t c" style="left:764.4px;width:71.4px;top:447.64000000000004px;display:flex;justify-content:center;color:#f0f0f0">-1</div>
<div class="t c" style="left:892.2px;width:49.9px;top:447.64000000000004px;display:flex;justify-content:center;color:#222">OUT-2</div>
<div style="left:942.1px;top:446.98px;width:21px;height:11.32px;background:#f4f400"></div>
<div class="t c" style="left:942.1px;width:21.2px;top:447.64000000000004px;display:flex;justify-content:center;color:#333">X</div>
<div class="t c" style="left:963.3px;width:41.4px;top:447.64000000000004px;display:flex;justify-content:center;color:#222">-5Y4.2A</div>
<div style="left:400.5px;top:458.3px;width:7.1px;height:10.32px;background:linear-gradient(90deg,#f4f4f4,#dedede)"></div>
<div style="left:407.6px;top:468.62px;width:597px;height:1px;background:#f0f0f0"></div>
<div style="left:435px;top:458.3px;width:1px;height:11.32px;background:#f0f0f0"></div>
<div style="left:461px;top:458.3px;width:1px;height:11.32px;background:#f0f0f0"></div>
<div style="left:487.4px;top:458.3px;width:1px;height:11.32px;background:#f0f0f0"></div>
<div style="left:502.5px;top:458.3px;width:1px;height:11.32px;background:#f0f0f0"></div>
<div style="left:536.4px;top:458.3px;width:1px;height:11.32px;background:#f0f0f0"></div>
<div style="left:561px;top:458.3px;width:1px;height:11.32px;background:#f0f0f0"></div>
<div style="left:599.4px;top:458.3px;width:1px;height:11.32px;background:#f0f0f0"></div>
<div style="left:654.5px;top:458.3px;width:1px;height:11.32px;background:#f0f0f0"></div>
<div style="left:713.5px;top:458.3px;width:1px;height:11.32px;background:#f0f0f0"></div>
<div style="left:763.4px;top:458.3px;width:1px;height:11.32px;background:#f0f0f0"></div>
<div style="left:834.8px;top:458.3px;width:1px;height:11.32px;background:#f0f0f0"></div>
<div style="left:891.2px;top:458.3px;width:1px;height:11.32px;background:#f0f0f0"></div>
<div style="left:941.1px;top:458.3px;width:1px;height:11.32px;background:#f0f0f0"></div>
<div style="left:962.3px;top:458.3px;width:1px;height:11.32px;background:#f0f0f0"></div>
<div style="left:436px;top:458.3px;width:25.5px;height:10.32px;background:#058a05"></div>
<div style="left:462px;top:458.3px;width:26px;height:10.32px;background:#058a05"></div>
<div class="t c" style="left:436px;width:26px;top:458.96000000000004px;display:flex;justify-content:center;color:#d8e860">167</div>
<div class="t c" style="left:462px;width:26.4px;top:458.96000000000004px;display:flex;justify-content:center;color:#d8e860">X</div>
<div style="left:488.4px;top:458.3px;width:15px;height:10.32px;background:#7d7d7d"></div>
<div style="left:537.4px;top:458.3px;width:23.600000000000023px;height:10.32px;background:#7d7d7d"></div>
<div style="left:562px;top:458.3px;width:37.39999999999998px;height:10.32px;background:#7d7d7d"></div>
<div style="left:600.4px;top:458.3px;width:54.10000000000002px;height:10.32px;background:#7d7d7d"></div>
<div style="left:655.5px;top:458.3px;width:58.0px;height:10.32px;background:#7d7d7d"></div>
<div style="left:714.5px;top:458.3px;width:48.89999999999998px;height:10.32px;background:#7d7d7d"></div>
<div style="left:764.4px;top:458.3px;width:70.39999999999998px;height:10.32px;background:#7d7d7d"></div>
<div style="left:835.8px;top:458.3px;width:55.40000000000009px;height:10.32px;background:#7d7d7d"></div>
<div class="t c" style="left:407.6px;width:28.4px;top:458.96000000000004px;display:flex;justify-content:center;color:#333">4A</div>
<div class="t c" style="left:503.5px;width:34px;top:458.96000000000004px;display:flex;justify-content:center;color:#222">-1</div>
<div class="t c" style="left:537.4px;width:24.6px;top:458.96000000000004px;display:flex;justify-content:center;color:#f0f0f0">-1</div>
<div class="t c" style="left:562px;width:38.4px;top:458.96000000000004px;display:flex;justify-content:center;color:#f0f0f0">-1</div>
<div class="t c" style="left:764.4px;width:71.4px;top:458.96000000000004px;display:flex;justify-content:center;color:#f0f0f0">-1</div>
<div class="t c" style="left:892.2px;width:49.9px;top:458.96000000000004px;display:flex;justify-content:center;color:#222">OUT-3</div>
<div style="left:942.1px;top:458.3px;width:21px;height:11.32px;background:#f4f400"></div>
<div class="t c" style="left:942.1px;width:21.2px;top:458.96000000000004px;display:flex;justify-content:center;color:#333">X</div>
<div class="t c" style="left:963.3px;width:41.4px;top:458.96000000000004px;display:flex;justify-content:center;color:#222">-5Y4.3A</div>
<div style="left:400.5px;top:469.62px;width:7.1px;height:10.32px;background:linear-gradient(90deg,#f4f4f4,#dedede)"></div>
<div style="left:407.6px;top:479.94px;width:597px;height:1px;background:#f0f0f0"></div>
<div style="left:435px;top:469.62px;width:1px;height:11.32px;background:#f0f0f0"></div>
<div style="left:461px;top:469.62px;width:1px;height:11.32px;background:#f0f0f0"></div>
<div style="left:487.4px;top:469.62px;width:1px;height:11.32px;background:#f0f0f0"></div>
<div style="left:502.5px;top:469.62px;width:1px;height:11.32px;background:#f0f0f0"></div>
<div style="left:536.4px;top:469.62px;width:1px;height:11.32px;background:#f0f0f0"></div>
<div style="left:561px;top:469.62px;width:1px;height:11.32px;background:#f0f0f0"></div>
<div style="left:599.4px;top:469.62px;width:1px;height:11.32px;background:#f0f0f0"></div>
<div style="left:654.5px;top:469.62px;width:1px;height:11.32px;background:#f0f0f0"></div>
<div style="left:713.5px;top:469.62px;width:1px;height:11.32px;background:#f0f0f0"></div>
<div style="left:763.4px;top:469.62px;width:1px;height:11.32px;background:#f0f0f0"></div>
<div style="left:834.8px;top:469.62px;width:1px;height:11.32px;background:#f0f0f0"></div>
<div style="left:891.2px;top:469.62px;width:1px;height:11.32px;background:#f0f0f0"></div>
<div style="left:941.1px;top:469.62px;width:1px;height:11.32px;background:#f0f0f0"></div>
<div style="left:962.3px;top:469.62px;width:1px;height:11.32px;background:#f0f0f0"></div>
<div style="left:436px;top:469.62px;width:25.5px;height:10.32px;background:#058a05"></div>
<div style="left:462px;top:469.62px;width:26px;height:10.32px;background:#058a05"></div>
<div class="t c" style="left:436px;width:26px;top:470.28000000000003px;display:flex;justify-content:center;color:#d8e860">167</div>
<div class="t c" style="left:462px;width:26.4px;top:470.28000000000003px;display:flex;justify-content:center;color:#d8e860">X</div>
<div style="left:488.4px;top:469.62px;width:15px;height:10.32px;background:#7d7d7d"></div>
<div style="left:537.4px;top:469.62px;width:23.600000000000023px;height:10.32px;background:#7d7d7d"></div>
<div style="left:562px;top:469.62px;width:37.39999999999998px;height:10.32px;background:#7d7d7d"></div>
<div style="left:600.4px;top:469.62px;width:54.10000000000002px;height:10.32px;background:#7d7d7d"></div>
<div style="left:655.5px;top:469.62px;width:58.0px;height:10.32px;background:#7d7d7d"></div>
<div style="left:714.5px;top:469.62px;width:48.89999999999998px;height:10.32px;background:#7d7d7d"></div>
<div style="left:764.4px;top:469.62px;width:70.39999999999998px;height:10.32px;background:#7d7d7d"></div>
<div style="left:835.8px;top:469.62px;width:55.40000000000009px;height:10.32px;background:#7d7d7d"></div>
<div class="t c" style="left:407.6px;width:28.4px;top:470.28000000000003px;display:flex;justify-content:center;color:#333">4A</div>
<div class="t c" style="left:503.5px;width:34px;top:470.28000000000003px;display:flex;justify-content:center;color:#222">-1</div>
<div class="t c" style="left:537.4px;width:24.6px;top:470.28000000000003px;display:flex;justify-content:center;color:#f0f0f0">-1</div>
<div class="t c" style="left:562px;width:38.4px;top:470.28000000000003px;display:flex;justify-content:center;color:#f0f0f0">-1</div>
<div class="t c" style="left:764.4px;width:71.4px;top:470.28000000000003px;display:flex;justify-content:center;color:#f0f0f0">-1</div>
<div class="t c" style="left:892.2px;width:49.9px;top:470.28000000000003px;display:flex;justify-content:center;color:#222">OUT-4</div>
<div style="left:942.1px;top:469.62px;width:21px;height:11.32px;background:#f4f400"></div>
<div class="t c" style="left:942.1px;width:21.2px;top:470.28000000000003px;display:flex;justify-content:center;color:#333">X</div>
<div class="t c" style="left:963.3px;width:41.4px;top:470.28000000000003px;display:flex;justify-content:center;color:#222">-5Y4.4A</div>
<div style="left:400.5px;top:480.94px;width:7.1px;height:10.32px;background:linear-gradient(90deg,#f4f4f4,#dedede)"></div>
<div style="left:407.6px;top:491.26px;width:597px;height:1px;background:#f0f0f0"></div>
<div style="left:435px;top:480.94px;width:1px;height:11.32px;background:#f0f0f0"></div>
<div style="left:461px;top:480.94px;width:1px;height:11.32px;background:#f0f0f0"></div>
<div style="left:487.4px;top:480.94px;width:1px;height:11.32px;background:#f0f0f0"></div>
<div style="left:502.5px;top:480.94px;width:1px;height:11.32px;background:#f0f0f0"></div>
<div style="left:536.4px;top:480.94px;width:1px;height:11.32px;background:#f0f0f0"></div>
<div style="left:561px;top:480.94px;width:1px;height:11.32px;background:#f0f0f0"></div>
<div style="left:599.4px;top:480.94px;width:1px;height:11.32px;background:#f0f0f0"></div>
<div style="left:654.5px;top:480.94px;width:1px;height:11.32px;background:#f0f0f0"></div>
<div style="left:713.5px;top:480.94px;width:1px;height:11.32px;background:#f0f0f0"></div>
<div style="left:763.4px;top:480.94px;width:1px;height:11.32px;background:#f0f0f0"></div>
<div style="left:834.8px;top:480.94px;width:1px;height:11.32px;background:#f0f0f0"></div>
<div style="left:891.2px;top:480.94px;width:1px;height:11.32px;background:#f0f0f0"></div>
<div style="left:941.1px;top:480.94px;width:1px;height:11.32px;background:#f0f0f0"></div>
<div style="left:962.3px;top:480.94px;width:1px;height:11.32px;background:#f0f0f0"></div>
<div style="left:436px;top:480.94px;width:25.5px;height:10.32px;background:#058a05"></div>
<div style="left:462px;top:480.94px;width:26px;height:10.32px;background:#058a05"></div>
<div class="t c" style="left:436px;width:26px;top:481.6px;display:flex;justify-content:center;color:#d8e860">167</div>
<div class="t c" style="left:462px;width:26.4px;top:481.6px;display:flex;justify-content:center;color:#d8e860">X</div>
<div class="t c" style="left:407.6px;width:28.4px;top:481.6px;display:flex;justify-content:center;color:#333">5A</div>
<div class="t c" style="left:503.5px;width:34px;top:481.6px;display:flex;justify-content:center;color:#222">-1</div>
<div class="t c" style="left:537.4px;width:24.6px;top:481.6px;display:flex;justify-content:center;color:#222">1</div>
<div class="t c" style="left:562px;width:38.4px;top:481.6px;display:flex;justify-content:center;color:#222">64</div>
<div class="t c" style="left:764.4px;width:71.4px;top:481.6px;display:flex;justify-content:center;color:#222">-1</div>
<div class="t c" style="left:655.5px;width:59px;top:481.6px;display:flex;justify-content:center;color:#111;font-weight:bold">X</div>
<div class="t c" style="left:892.2px;width:49.9px;top:481.6px;display:flex;justify-content:center;color:#222">IN-1</div>
<div style="left:942.1px;top:480.94px;width:21px;height:11.32px;background:#f4f400"></div>
<div class="t c" style="left:942.1px;width:21.2px;top:481.6px;display:flex;justify-content:center;color:#333">X</div>
<div class="t c" style="left:963.3px;width:41.4px;top:481.6px;display:flex;justify-content:center;color:#222">-6B5.1A</div>
<div style="left:400.5px;top:492.26px;width:7.1px;height:10.32px;background:linear-gradient(90deg,#f4f4f4,#dedede)"></div>
<div style="left:407.6px;top:502.58px;width:597px;height:1px;background:#f0f0f0"></div>
<div style="left:435px;top:492.26px;width:1px;height:11.32px;background:#f0f0f0"></div>
<div style="left:461px;top:492.26px;width:1px;height:11.32px;background:#f0f0f0"></div>
<div style="left:487.4px;top:492.26px;width:1px;height:11.32px;background:#f0f0f0"></div>
<div style="left:502.5px;top:492.26px;width:1px;height:11.32px;background:#f0f0f0"></div>
<div style="left:536.4px;top:492.26px;width:1px;height:11.32px;background:#f0f0f0"></div>
<div style="left:561px;top:492.26px;width:1px;height:11.32px;background:#f0f0f0"></div>
<div style="left:599.4px;top:492.26px;width:1px;height:11.32px;background:#f0f0f0"></div>
<div style="left:654.5px;top:492.26px;width:1px;height:11.32px;background:#f0f0f0"></div>
<div style="left:713.5px;top:492.26px;width:1px;height:11.32px;background:#f0f0f0"></div>
<div style="left:763.4px;top:492.26px;width:1px;height:11.32px;background:#f0f0f0"></div>
<div style="left:834.8px;top:492.26px;width:1px;height:11.32px;background:#f0f0f0"></div>
<div style="left:891.2px;top:492.26px;width:1px;height:11.32px;background:#f0f0f0"></div>
<div style="left:941.1px;top:492.26px;width:1px;height:11.32px;background:#f0f0f0"></div>
<div style="left:962.3px;top:492.26px;width:1px;height:11.32px;background:#f0f0f0"></div>
<div style="left:436px;top:492.26px;width:25.5px;height:10.32px;background:#058a05"></div>
<div style="left:462px;top:492.26px;width:26px;height:10.32px;background:#058a05"></div>
<div class="t c" style="left:436px;width:26px;top:492.92px;display:flex;justify-content:center;color:#d8e860">167</div>
<div class="t c" style="left:462px;width:26.4px;top:492.92px;display:flex;justify-content:center;color:#d8e860">X</div>
<div class="t c" style="left:407.6px;width:28.4px;top:492.92px;display:flex;justify-content:center;color:#333">5A</div>
<div class="t c" style="left:503.5px;width:34px;top:492.92px;display:flex;justify-content:center;color:#222">-1</div>
<div class="t c" style="left:537.4px;width:24.6px;top:492.92px;display:flex;justify-content:center;color:#222">1</div>
<div class="t c" style="left:562px;width:38.4px;top:492.92px;display:flex;justify-content:center;color:#222">64</div>
<div class="t c" style="left:764.4px;width:71.4px;top:492.92px;display:flex;justify-content:center;color:#222">-1</div>
<div class="t c" style="left:655.5px;width:59px;top:492.92px;display:flex;justify-content:center;color:#111;font-weight:bold">X</div>
<div class="t c" style="left:892.2px;width:49.9px;top:492.92px;display:flex;justify-content:center;color:#222">IN-2</div>
<div style="left:942.1px;top:492.26px;width:21px;height:11.32px;background:#f4f400"></div>
<div class="t c" style="left:942.1px;width:21.2px;top:492.92px;display:flex;justify-content:center;color:#333">X</div>
<div class="t c" style="left:963.3px;width:41.4px;top:492.92px;display:flex;justify-content:center;color:#222">-6B5.2A</div>
<div style="left:400.5px;top:503.58000000000004px;width:7.1px;height:10.32px;background:linear-gradient(90deg,#f4f4f4,#dedede)"></div>
<div style="left:407.6px;top:513.9000000000001px;width:597px;height:1px;background:#f0f0f0"></div>
<div style="left:435px;top:503.58000000000004px;width:1px;height:11.32px;background:#f0f0f0"></div>
<div style="left:461px;top:503.58000000000004px;width:1px;height:11.32px;background:#f0f0f0"></div>
<div style="left:487.4px;top:503.58000000000004px;width:1px;height:11.32px;background:#f0f0f0"></div>
<div style="left:502.5px;top:503.58000000000004px;width:1px;height:11.32px;background:#f0f0f0"></div>
<div style="left:536.4px;top:503.58000000000004px;width:1px;height:11.32px;background:#f0f0f0"></div>
<div style="left:561px;top:503.58000000000004px;width:1px;height:11.32px;background:#f0f0f0"></div>
<div style="left:599.4px;top:503.58000000000004px;width:1px;height:11.32px;background:#f0f0f0"></div>
<div style="left:654.5px;top:503.58000000000004px;width:1px;height:11.32px;background:#f0f0f0"></div>
<div style="left:713.5px;top:503.58000000000004px;width:1px;height:11.32px;background:#f0f0f0"></div>
<div style="left:763.4px;top:503.58000000000004px;width:1px;height:11.32px;background:#f0f0f0"></div>
<div style="left:834.8px;top:503.58000000000004px;width:1px;height:11.32px;background:#f0f0f0"></div>
<div style="left:891.2px;top:503.58000000000004px;width:1px;height:11.32px;background:#f0f0f0"></div>
<div style="left:941.1px;top:503.58000000000004px;width:1px;height:11.32px;background:#f0f0f0"></div>
<div style="left:962.3px;top:503.58000000000004px;width:1px;height:11.32px;background:#f0f0f0"></div>
<div style="left:436px;top:503.58000000000004px;width:25.5px;height:10.32px;background:#058a05"></div>
<div style="left:462px;top:503.58000000000004px;width:26px;height:10.32px;background:#058a05"></div>
<div class="t c" style="left:436px;width:26px;top:504.24000000000007px;display:flex;justify-content:center;color:#d8e860">167</div>
<div class="t c" style="left:462px;width:26.4px;top:504.24000000000007px;display:flex;justify-content:center;color:#d8e860">X</div>
<div class="t c" style="left:407.6px;width:28.4px;top:504.24000000000007px;display:flex;justify-content:center;color:#333">5A</div>
<div class="t c" style="left:503.5px;width:34px;top:504.24000000000007px;display:flex;justify-content:center;color:#222">-1</div>
<div class="t c" style="left:537.4px;width:24.6px;top:504.24000000000007px;display:flex;justify-content:center;color:#222">1</div>
<div class="t c" style="left:562px;width:38.4px;top:504.24000000000007px;display:flex;justify-content:center;color:#222">64</div>
<div class="t c" style="left:764.4px;width:71.4px;top:504.24000000000007px;display:flex;justify-content:center;color:#222">-1</div>
<div class="t c" style="left:655.5px;width:59px;top:504.24000000000007px;display:flex;justify-content:center;color:#111;font-weight:bold">X</div>
<div class="t c" style="left:892.2px;width:49.9px;top:504.24000000000007px;display:flex;justify-content:center;color:#222">IN-3</div>
<div style="left:942.1px;top:503.58000000000004px;width:21px;height:11.32px;background:#f4f400"></div>
<div class="t c" style="left:942.1px;width:21.2px;top:504.24000000000007px;display:flex;justify-content:center;color:#333">X</div>
<div class="t c" style="left:963.3px;width:41.4px;top:504.24000000000007px;display:flex;justify-content:center;color:#222">-6B5.3A</div>
<div style="left:400.5px;top:514.9px;width:7.1px;height:10.32px;background:linear-gradient(90deg,#f4f4f4,#dedede)"></div>
<div style="left:407.6px;top:525.22px;width:597px;height:1px;background:#f0f0f0"></div>
<div style="left:435px;top:514.9px;width:1px;height:11.32px;background:#f0f0f0"></div>
<div style="left:461px;top:514.9px;width:1px;height:11.32px;background:#f0f0f0"></div>
<div style="left:487.4px;top:514.9px;width:1px;height:11.32px;background:#f0f0f0"></div>
<div style="left:502.5px;top:514.9px;width:1px;height:11.32px;background:#f0f0f0"></div>
<div style="left:536.4px;top:514.9px;width:1px;height:11.32px;background:#f0f0f0"></div>
<div style="left:561px;top:514.9px;width:1px;height:11.32px;background:#f0f0f0"></div>
<div style="left:599.4px;top:514.9px;width:1px;height:11.32px;background:#f0f0f0"></div>
<div style="left:654.5px;top:514.9px;width:1px;height:11.32px;background:#f0f0f0"></div>
<div style="left:713.5px;top:514.9px;width:1px;height:11.32px;background:#f0f0f0"></div>
<div style="left:763.4px;top:514.9px;width:1px;height:11.32px;background:#f0f0f0"></div>
<div style="left:834.8px;top:514.9px;width:1px;height:11.32px;background:#f0f0f0"></div>
<div style="left:891.2px;top:514.9px;width:1px;height:11.32px;background:#f0f0f0"></div>
<div style="left:941.1px;top:514.9px;width:1px;height:11.32px;background:#f0f0f0"></div>
<div style="left:962.3px;top:514.9px;width:1px;height:11.32px;background:#f0f0f0"></div>
<div style="left:436px;top:514.9px;width:25.5px;height:10.32px;background:#058a05"></div>
<div style="left:462px;top:514.9px;width:26px;height:10.32px;background:#058a05"></div>
<div class="t c" style="left:436px;width:26px;top:515.56px;display:flex;justify-content:center;color:#d8e860">167</div>
<div class="t c" style="left:462px;width:26.4px;top:515.56px;display:flex;justify-content:center;color:#d8e860">X</div>
<div class="t c" style="left:407.6px;width:28.4px;top:515.56px;display:flex;justify-content:center;color:#333">5A</div>
<div class="t c" style="left:503.5px;width:34px;top:515.56px;display:flex;justify-content:center;color:#222">-1</div>
<div class="t c" style="left:537.4px;width:24.6px;top:515.56px;display:flex;justify-content:center;color:#222">-1</div>
<div class="t c" style="left:562px;width:38.4px;top:515.56px;display:flex;justify-content:center;color:#222">-1</div>
<div class="t c" style="left:764.4px;width:71.4px;top:515.56px;display:flex;justify-content:center;color:#222">-1</div>
<div class="t c" style="left:892.2px;width:49.9px;top:515.56px;display:flex;justify-content:center;color:#222">IN-4</div>
<div class="t c" style="left:963.3px;width:41.4px;top:515.56px;display:flex;justify-content:center;color:#222">Res.</div>
<div style="left:400.5px;top:526.22px;width:7.1px;height:10.32px;background:linear-gradient(90deg,#f4f4f4,#dedede)"></div>
<div style="left:407.6px;top:536.5400000000001px;width:597px;height:1px;background:#f0f0f0"></div>
<div style="left:435px;top:526.22px;width:1px;height:11.32px;background:#f0f0f0"></div>
<div style="left:461px;top:526.22px;width:1px;height:11.32px;background:#f0f0f0"></div>
<div style="left:487.4px;top:526.22px;width:1px;height:11.32px;background:#f0f0f0"></div>
<div style="left:502.5px;top:526.22px;width:1px;height:11.32px;background:#f0f0f0"></div>
<div style="left:536.4px;top:526.22px;width:1px;height:11.32px;background:#f0f0f0"></div>
<div style="left:561px;top:526.22px;width:1px;height:11.32px;background:#f0f0f0"></div>
<div style="left:599.4px;top:526.22px;width:1px;height:11.32px;background:#f0f0f0"></div>
<div style="left:654.5px;top:526.22px;width:1px;height:11.32px;background:#f0f0f0"></div>
<div style="left:713.5px;top:526.22px;width:1px;height:11.32px;background:#f0f0f0"></div>
<div style="left:763.4px;top:526.22px;width:1px;height:11.32px;background:#f0f0f0"></div>
<div style="left:834.8px;top:526.22px;width:1px;height:11.32px;background:#f0f0f0"></div>
<div style="left:891.2px;top:526.22px;width:1px;height:11.32px;background:#f0f0f0"></div>
<div style="left:941.1px;top:526.22px;width:1px;height:11.32px;background:#f0f0f0"></div>
<div style="left:962.3px;top:526.22px;width:1px;height:11.32px;background:#f0f0f0"></div>
<div style="left:436px;top:526.22px;width:25.5px;height:10.32px;background:#058a05"></div>
<div style="left:462px;top:526.22px;width:26px;height:10.32px;background:#058a05"></div>
<div class="t c" style="left:436px;width:26px;top:526.88px;display:flex;justify-content:center;color:#d8e860">167</div>
<div class="t c" style="left:462px;width:26.4px;top:526.88px;display:flex;justify-content:center;color:#d8e860">X</div>
<div style="left:488.4px;top:526.22px;width:15px;height:10.32px;background:#7d7d7d"></div>
<div style="left:537.4px;top:526.22px;width:23.600000000000023px;height:10.32px;background:#7d7d7d"></div>
<div style="left:562px;top:526.22px;width:37.39999999999998px;height:10.32px;background:#7d7d7d"></div>
<div style="left:600.4px;top:526.22px;width:54.10000000000002px;height:10.32px;background:#7d7d7d"></div>
<div style="left:655.5px;top:526.22px;width:58.0px;height:10.32px;background:#7d7d7d"></div>
<div style="left:714.5px;top:526.22px;width:48.89999999999998px;height:10.32px;background:#7d7d7d"></div>
<div style="left:764.4px;top:526.22px;width:70.39999999999998px;height:10.32px;background:#7d7d7d"></div>
<div style="left:835.8px;top:526.22px;width:55.40000000000009px;height:10.32px;background:#7d7d7d"></div>
<div class="t c" style="left:407.6px;width:28.4px;top:526.88px;display:flex;justify-content:center;color:#333">5A</div>
<div class="t c" style="left:503.5px;width:34px;top:526.88px;display:flex;justify-content:center;color:#222">-1</div>
<div class="t c" style="left:537.4px;width:24.6px;top:526.88px;display:flex;justify-content:center;color:#f0f0f0">-1</div>
<div class="t c" style="left:562px;width:38.4px;top:526.88px;display:flex;justify-content:center;color:#f0f0f0">-1</div>
<div class="t c" style="left:764.4px;width:71.4px;top:526.88px;display:flex;justify-content:center;color:#f0f0f0">-1</div>
<div class="t c" style="left:892.2px;width:49.9px;top:526.88px;display:flex;justify-content:center;color:#222">OUT-1</div>
<div style="left:942.1px;top:526.22px;width:21px;height:11.32px;background:#f4f400"></div>
<div class="t c" style="left:942.1px;width:21.2px;top:526.88px;display:flex;justify-content:center;color:#333">X</div>
<div class="t c" style="left:963.3px;width:41.4px;top:526.88px;display:flex;justify-content:center;color:#222">-6Y5.1A</div>
<div style="left:400.5px;top:288.5px;width:7.1px;height:10.32px;background:#fff"></div>
<div style="left:402px;top:290.5px;width:0;height:0;border-top:3.5px solid transparent;border-bottom:3.5px solid transparent;border-left:4px solid #111"></div>
<div style="left:408px;top:288.5px;width:27.5px;height:10.32px;background:#fff;border:1px solid #9a9a9a;box-sizing:border-box"></div>
<div class="t c" style="left:407.6px;width:28.4px;top:289.16px;display:flex;justify-content:center;color:#333">2A</div>
<div style="left:1004.7px;top:276.5px;width:12px;height:270.5px;background:#f3f3f3;border-left:1px solid #e4e4e4;box-sizing:border-box"></div>
<div class="t" style="left:1008.5px;top:277.7px;font-size:7px;color:#444">▴</div>
<div style="left:1006.5px;top:295px;width:8px;height:15px;background:linear-gradient(90deg,#f4f4f4,#dadada);border:1px solid #a8a8a8;border-radius:2px;box-sizing:border-box"></div>
<div style="left:1008.5px;top:300.5px;width:4px;height:0.8px;background:#8a8a8a"></div>
<div style="left:1008.5px;top:302.5px;width:4px;height:0.8px;background:#8a8a8a"></div>
<div style="left:1008.5px;top:304.5px;width:4px;height:0.8px;background:#8a8a8a"></div>
<div class="t" style="left:1008.5px;top:536px;font-size:7px;color:#444">▾</div>
<div style="left:399px;top:546.5px;width:618px;height:1.5px;background:#a0a0a0"></div>
<div style="left:1016.5px;top:259px;width:1px;height:289px;background:#a0a0a0"></div>
</body></html>
